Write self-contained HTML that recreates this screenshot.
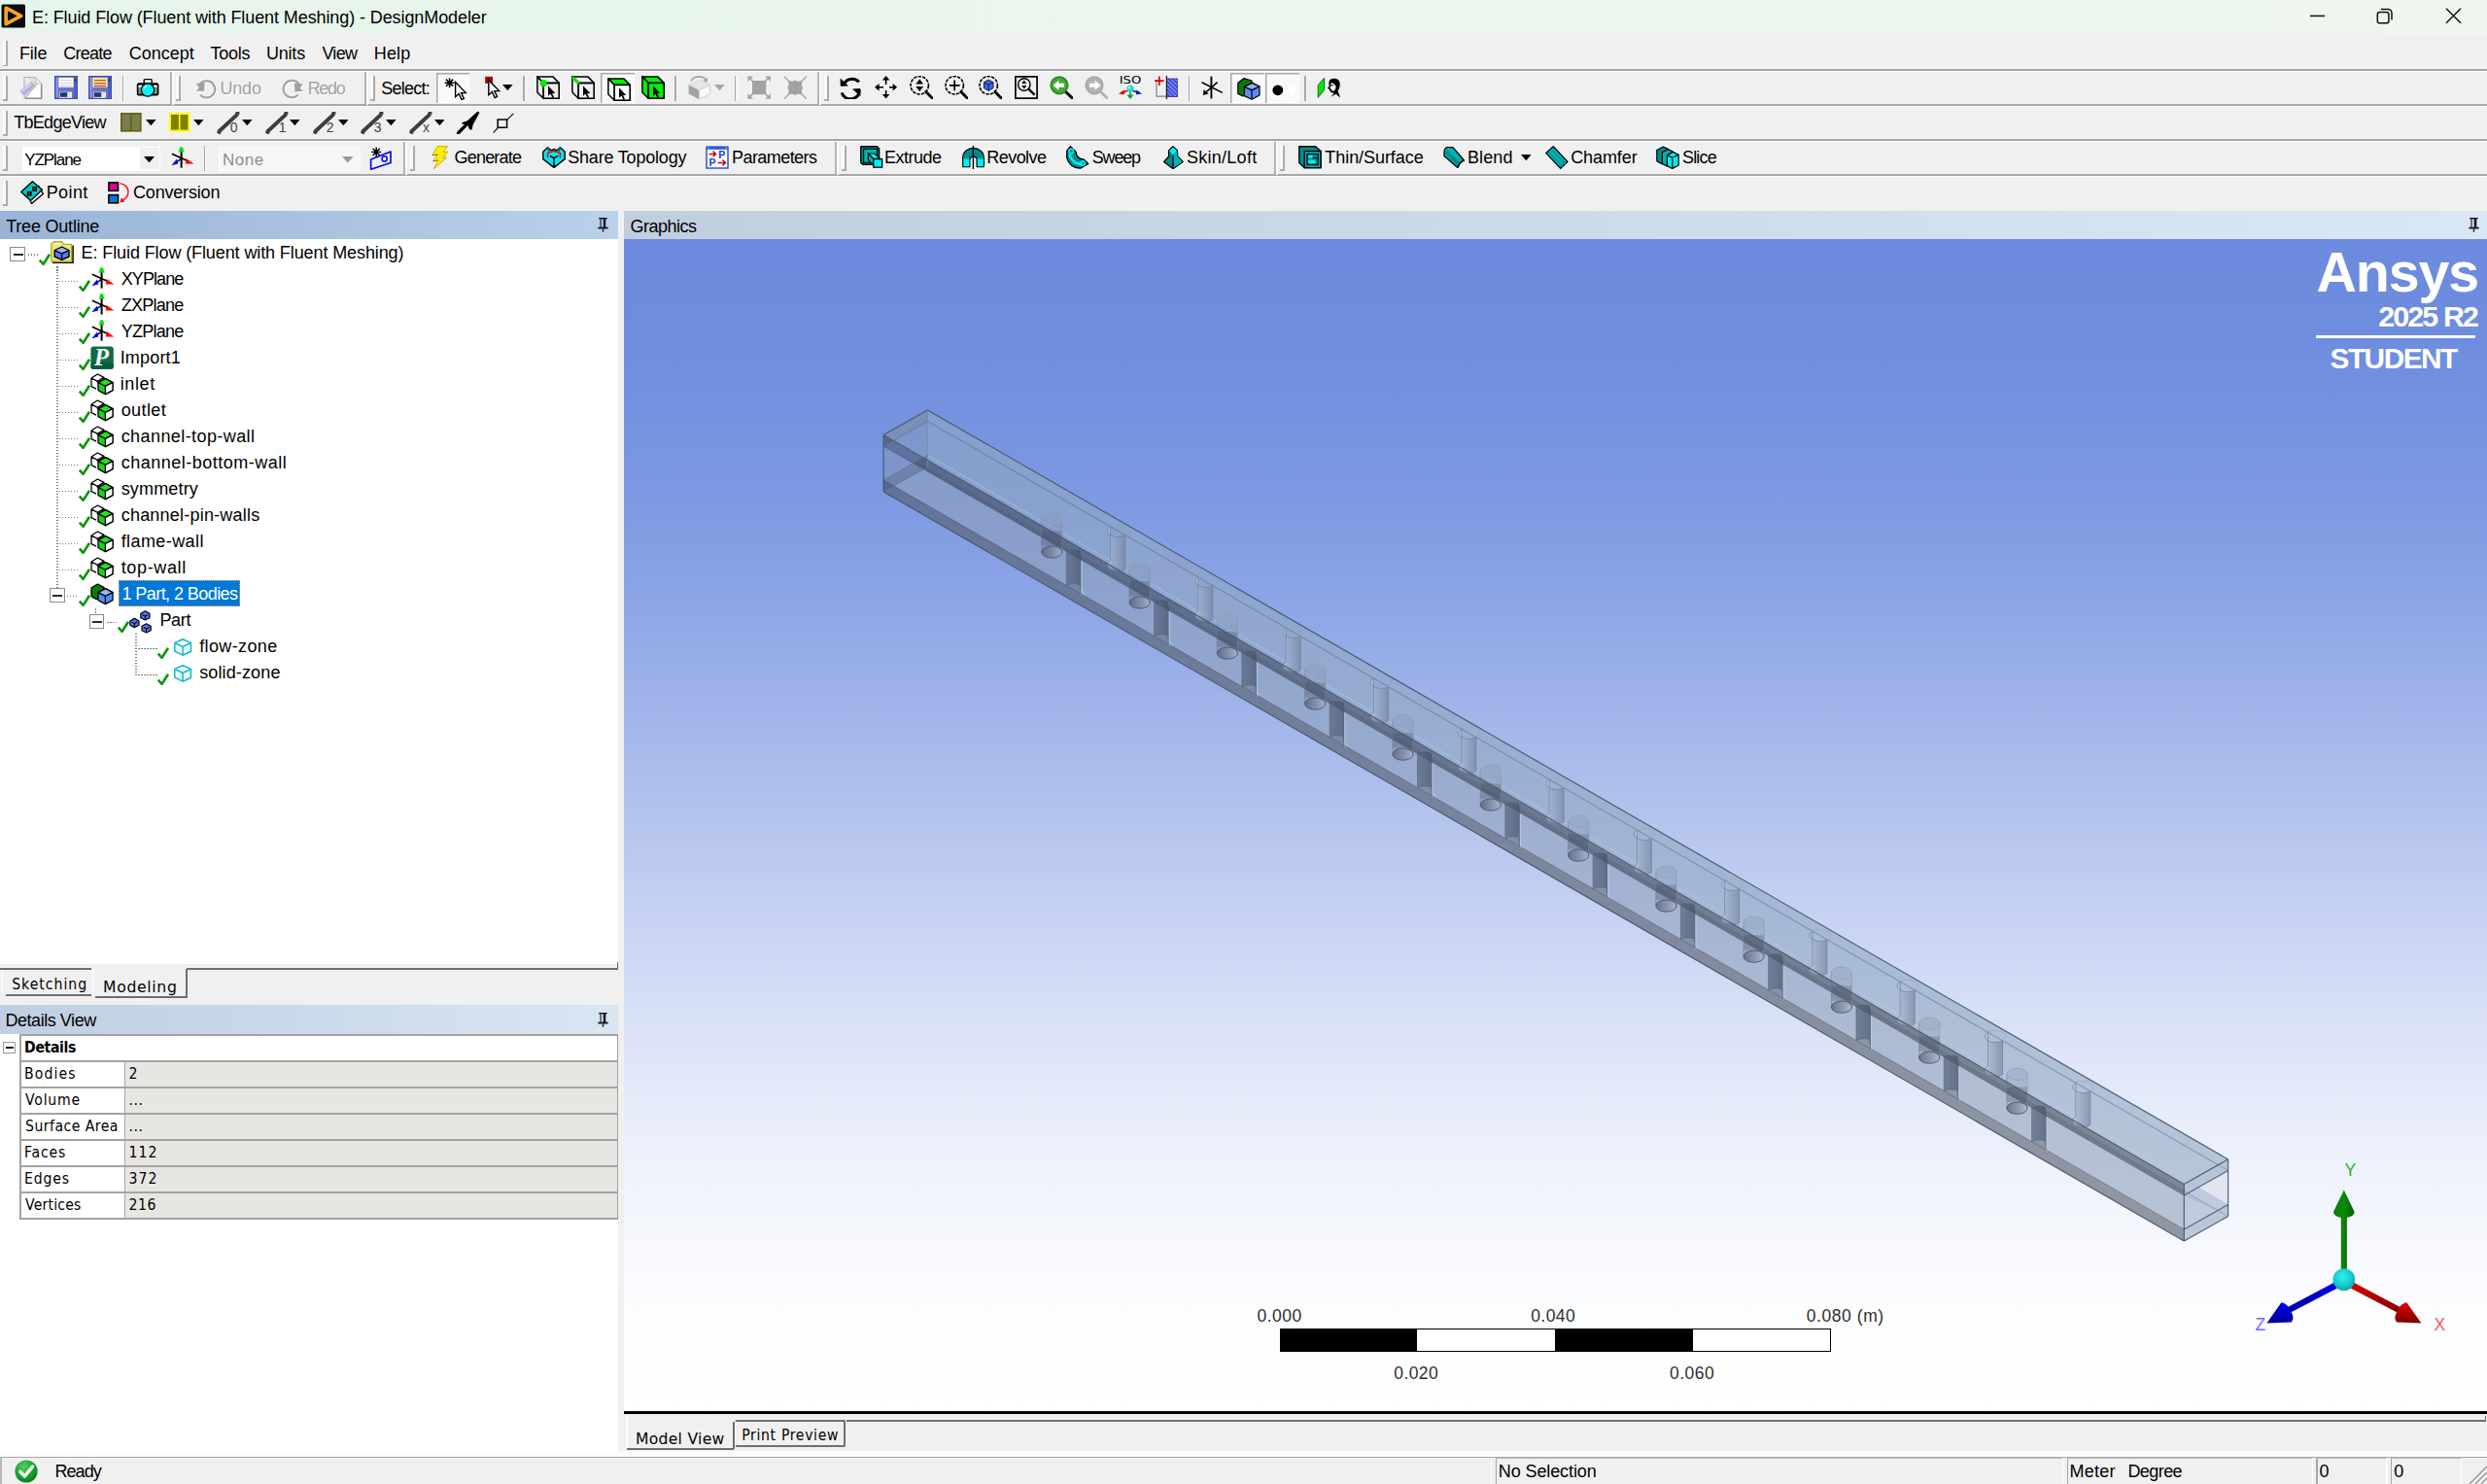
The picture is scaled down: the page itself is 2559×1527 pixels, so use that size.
<!DOCTYPE html>
<html lang="en"><head><meta charset="utf-8"><title>E: Fluid Flow (Fluent with Fluent Meshing) - DesignModeler</title><style>
html,body{margin:0;padding:0}
body{width:2559px;height:1527px;overflow:hidden;background:#f0f0f0;position:relative;font-family:"Liberation Sans",sans-serif}
.a{position:absolute;display:block}
.t{position:absolute;line-height:1;white-space:pre;display:block}
</style></head>
<body>

<header aria-label="Title bar and menu bar"><div class="a" style="left:0px;top:0px;width:2559px;height:35px;background:linear-gradient(90deg,#e6f5eb 0%,#ebf6ee 50%,#eef6ee 100%);"></div><svg class="a" style="left:1px;top:4px" width="26" height="25" viewBox="0 0 26 25"><rect x="0.5" y="0.5" width="24.5" height="24" rx="1.5" fill="#0b0b0b"/><path d="M5.2 4.2 L20.6 12.3 L5.2 20.6 Z" fill="none" stroke="#f5a81c" stroke-width="3.6" stroke-linejoin="round"/><path d="M8.6 9.6 L13.8 12.3 L8.6 15.2 Z" fill="#0b0b0b"/></svg><span class="t " style="left:33.00px;top:9.00px;font-size:18px;font-family:'Liberation Sans', sans-serif;color:#000;letter-spacing:-0.096px;">E: Fluid Flow (Fluent with Fluent Meshing) - DesignModeler</span><svg class="a" style="left:2360px;top:0" width="199" height="35" viewBox="0 0 199 35" fill="none" stroke="#111" stroke-width="1.5"><path d="M17 16.4 H32.2"/><rect x="86.3" y="12.4" width="11.6" height="11.4" rx="2.4"/><path d="M89.8 9.4 H97 A4 4 0 0 1 101 13.4 V20.6"/><path d="M157 8.8 L172 23.8 M172 8.8 L157 23.8"/></svg><div class="a" style="left:0px;top:35px;width:2559px;height:37px;background:#f0f0f0;"></div><div class="a" style="left:3px;top:42px;width:3px;height:25px;background:#fbfbfb;"></div><div class="a" style="left:6px;top:42px;width:2px;height:26px;background:#ababab;"></div><div class="a" style="left:3px;top:66.5px;width:5px;height:1.5px;background:#ababab;"></div><span class="t " style="left:19.90px;top:46.00px;font-size:18px;font-family:'Liberation Sans', sans-serif;color:#000;letter-spacing:-0.131px;">File</span><span class="t " style="left:65.20px;top:46.00px;font-size:18px;font-family:'Liberation Sans', sans-serif;color:#000;letter-spacing:-0.763px;">Create</span><span class="t " style="left:132.80px;top:46.00px;font-size:18px;font-family:'Liberation Sans', sans-serif;color:#000;letter-spacing:-0.024px;">Concept</span><span class="t " style="left:216.40px;top:46.00px;font-size:18px;font-family:'Liberation Sans', sans-serif;color:#000;letter-spacing:-0.205px;">Tools</span><span class="t " style="left:273.90px;top:46.00px;font-size:18px;font-family:'Liberation Sans', sans-serif;color:#000;letter-spacing:-0.177px;">Units</span><span class="t " style="left:331.40px;top:46.00px;font-size:18px;font-family:'Liberation Sans', sans-serif;color:#000;letter-spacing:-0.697px;">View</span><span class="t " style="left:384.70px;top:46.00px;font-size:18px;font-family:'Liberation Sans', sans-serif;color:#000;letter-spacing:0.197px;">Help</span><div class="a" style="left:0px;top:71px;width:2559px;height:2px;background:#a6a6a6;"></div><div class="a" style="left:0px;top:73px;width:2559px;height:1px;background:#fdfdfd;"></div><div class="a" style="left:0px;top:107px;width:2559px;height:2px;background:#a6a6a6;"></div><div class="a" style="left:0px;top:109px;width:2559px;height:1px;background:#fdfdfd;"></div><div class="a" style="left:0px;top:143px;width:2559px;height:2px;background:#a6a6a6;"></div><div class="a" style="left:0px;top:145px;width:2559px;height:1px;background:#fdfdfd;"></div><div class="a" style="left:0px;top:179px;width:2559px;height:2px;background:#a6a6a6;"></div><div class="a" style="left:0px;top:181px;width:2559px;height:1px;background:#fdfdfd;"></div></header>
<nav aria-label="Toolbars"><div class="a" style="left:3px;top:77.5px;width:3px;height:25px;background:#fbfbfb;"></div><div class="a" style="left:6px;top:77.5px;width:2px;height:26px;background:#ababab;"></div><div class="a" style="left:3px;top:102.0px;width:5px;height:1.5px;background:#ababab;"></div><svg class="a" style="left:19.6px;top:78.4px" width="24" height="24" viewBox="0 0 24 24"><defs><linearGradient id="gnew" x1="0" y1="0" x2="1" y2="1"><stop offset="0" stop-color="#fdfdfd"/><stop offset="0.55" stop-color="#c9c9c9"/><stop offset="0.56" stop-color="#ffffff"/><stop offset="1" stop-color="#ffffff"/></linearGradient></defs><path d="M5 1.5 H16.5 L23 8 V23 H5 Z" fill="url(#gnew)" stroke="#a9a9a9" stroke-width="1"/><path d="M16.5 1.5 V8 H23 Z" fill="#e9e9e9" stroke="#b5b5b5" stroke-width="0.8"/><path d="M22.5 9 V23.5 H6" fill="none" stroke="#8d8d8d" stroke-width="1.3"/><path d="M1 15.5 L12.5 7.2 L15.3 10.6 L4.3 19.6 Z" fill="#b9b3e6" stroke="#9a92d6" stroke-width="0.8" stroke-linejoin="round"/><path d="M2.2 15.6 L12.2 8.4" stroke="#dcd9f5" stroke-width="1.4"/></svg><svg class="a" style="left:55.6px;top:78.4px" width="24" height="24" viewBox="0 0 24 24"><rect x="0.6" y="0.6" width="22.8" height="22.8" fill="#6874cc" stroke="#3d4cb4" stroke-width="1.2"/><rect x="1.6" y="1.6" width="2" height="20.8" fill="#9098dc"/><rect x="20.3" y="1.6" width="2.2" height="21" fill="#4a58bc"/><rect x="4.4" y="1.8" width="15.2" height="10" fill="#ffffff"/><rect x="20.6" y="2.4" width="1.6" height="3.6" fill="#27348a"/><rect x="5.2" y="16.6" width="12.8" height="6.2" fill="#e6e6e6"/><rect x="5.8" y="17.2" width="7.4" height="4.6" fill="#24356f"/><rect x="6" y="4.0" width="12" height="1.3" fill="#d8d8d8"/><rect x="6" y="7.0" width="12" height="1.3" fill="#d8d8d8"/><rect x="6" y="9.8" width="12" height="1.3" fill="#d8d8d8"/></svg><svg class="a" style="left:91.4px;top:78.4px" width="24" height="24" viewBox="0 0 24 24"><rect x="0.6" y="0.6" width="22.8" height="22.8" fill="#6874cc" stroke="#3d4cb4" stroke-width="1.2"/><rect x="1.6" y="1.6" width="2" height="20.8" fill="#9098dc"/><rect x="20.3" y="1.6" width="2.2" height="21" fill="#4a58bc"/><rect x="4.4" y="1.8" width="15.2" height="10" fill="#f4e896"/><rect x="20.6" y="2.4" width="1.6" height="3.6" fill="#27348a"/><rect x="5.2" y="16.6" width="12.8" height="6.2" fill="#e6e6e6"/><rect x="5.8" y="17.2" width="7.4" height="4.6" fill="#24356f"/><rect x="6" y="4.0" width="12" height="1.3" fill="#c8503c"/><rect x="6" y="7.0" width="12" height="1.3" fill="#c8503c"/><rect x="6" y="9.8" width="12" height="1.3" fill="#c8503c"/></svg><div class="a" style="left:125.8px;top:78px;width:1.6px;height:26px;background:#a8a8a8;"></div><div class="a" style="left:127.39999999999999px;top:78px;width:1px;height:26px;background:#fafafa;"></div><svg class="a" style="left:139.6px;top:79px" width="24" height="24" viewBox="0 0 24 24"><rect x="8.2" y="2.6" width="8" height="4" rx="1" fill="#fff" stroke="#000" stroke-width="1.4"/><rect x="0.8" y="6.2" width="22.6" height="13.2" rx="2.2" fill="#000"/><rect x="2.4" y="9.6" width="4" height="8" fill="#8a8a8a"/><rect x="2.4" y="8.6" width="4" height="2" fill="#fff"/><rect x="17.8" y="9.6" width="4" height="8" fill="#8a8a8a"/><rect x="17.8" y="8.6" width="4" height="2" fill="#fff"/><circle cx="12" cy="13.6" r="6.6" fill="#00f6f6" stroke="#000" stroke-width="1.2"/><path d="M8.6 11.8 A4.6 4.6 0 0 1 11 9.2" stroke="#c8ffff" stroke-width="1.3" fill="none"/></svg><div class="a" style="left:175.0px;top:74px;width:2px;height:33px;background:#b4b4b4;"></div><div class="a" style="left:177.0px;top:74px;width:2px;height:34px;background:#fdfdfd;"></div><div class="a" style="left:181px;top:77.5px;width:3px;height:25px;background:#fbfbfb;"></div><div class="a" style="left:184px;top:77.5px;width:2px;height:26px;background:#ababab;"></div><div class="a" style="left:181px;top:102.0px;width:5px;height:1.5px;background:#ababab;"></div><svg class="a" style="left:201px;top:79px" width="24" height="24" viewBox="0 0 24 24"><g transform="translate(1 1)"><path d="M3.4 10.4 A8.6 8.6 0 1 1 5.2 18.6" fill="none" stroke="#ffffff" stroke-width="2"/><path d="M0.8 7 L9.6 6.2 L9.2 15 L0.8 14.4 L4 11 Z" fill="#ffffff"/></g><g transform="translate(0 0)"><path d="M3.4 10.4 A8.6 8.6 0 1 1 5.2 18.6" fill="none" stroke="#a0a0a0" stroke-width="2"/><path d="M0.8 7 L9.6 6.2 L9.2 15 L0.8 14.4 L4 11 Z" fill="#a0a0a0"/></g></svg><span class="t " style="left:226.60px;top:82.00px;font-size:18px;font-family:'Liberation Sans', sans-serif;color:#a2a2a2;letter-spacing:-0.240px;text-shadow:1px 1px 0 #fff;">Undo</span><svg class="a" style="left:289px;top:79px" width="24" height="24" viewBox="0 0 24 24"><g transform="translate(1 1)"><path d="M20 10.6 A8.8 8.8 0 1 0 17.6 18.8" fill="none" stroke="#ffffff" stroke-width="2"/><path d="M22.8 7.4 L14 6.6 L14.4 15.4 L22.8 14.8 L19.6 11.4 Z" fill="#ffffff"/></g><g transform="translate(0 0)"><path d="M20 10.6 A8.8 8.8 0 1 0 17.6 18.8" fill="none" stroke="#a0a0a0" stroke-width="2"/><path d="M22.8 7.4 L14 6.6 L14.4 15.4 L22.8 14.8 L19.6 11.4 Z" fill="#a0a0a0"/></g></svg><span class="t " style="left:316.70px;top:82.00px;font-size:18px;font-family:'Liberation Sans', sans-serif;color:#a2a2a2;letter-spacing:-1.340px;text-shadow:1px 1px 0 #fff;">Redo</span><div class="a" style="left:374.5px;top:74px;width:2px;height:33px;background:#b4b4b4;"></div><div class="a" style="left:376.5px;top:74px;width:2px;height:34px;background:#fdfdfd;"></div><div class="a" style="left:381px;top:77.5px;width:3px;height:25px;background:#fbfbfb;"></div><div class="a" style="left:384px;top:77.5px;width:2px;height:26px;background:#ababab;"></div><div class="a" style="left:381px;top:102.0px;width:5px;height:1.5px;background:#ababab;"></div><span class="t " style="left:392.20px;top:82.00px;font-size:18px;font-family:'Liberation Sans', sans-serif;color:#000;letter-spacing:-0.738px;">Select:</span><div class="a" style="left:448.8px;top:75px;width:34.5px;height:31px;background:#f9f9f9;box-shadow:inset 1.5px 1.5px 0 #a9a9a9, inset -1px -1px 0 #ffffff;"></div><svg class="a" style="left:457.2px;top:79.2px" width="24" height="24" viewBox="0 0 24 24"><g stroke="#000" stroke-width="1.5"><path d="M5.6 1.2 V11.2 M0.6 6.2 H10.6 M2 2.6 L9.2 9.8 M9.2 2.6 L2 9.8"/></g><circle cx="5.6" cy="6.2" r="2.4" fill="#000"/><path transform="translate(11.6 5.4) scale(1.08)" d="M0 0 V14.2 L3.3 11.2 L5.9 16.8 L8.1 15.8 L5.6 10.4 H10 Z" fill="#fff" stroke="#000" stroke-width="1.3" stroke-linejoin="miter"/></svg><svg class="a" style="left:497px;top:78px" width="24" height="24" viewBox="0 0 24 24"><rect x="2.2" y="0.8" width="7.8" height="7" fill="#a80000"/><path transform="translate(5.8 4.4) scale(1.08)" d="M0 0 V14.2 L3.3 11.2 L5.9 16.8 L8.1 15.8 L5.6 10.4 H10 Z" fill="#fff" stroke="#000" stroke-width="1.3"/></svg><svg class="a" style="left:517.4px;top:87.2px" width="10.6" height="6.2" viewBox="0 0 10.6 6.2"><path d="M0 0 H10.6 L5.3 6.2 Z" fill="#000"/></svg><div class="a" style="left:538.4000000000001px;top:78px;width:1.6px;height:26px;background:#a8a8a8;"></div><div class="a" style="left:540.0px;top:78px;width:1px;height:26px;background:#fafafa;"></div><svg class="a" style="left:552px;top:78.4px" width="24" height="24" viewBox="0 0 24 24"><path d="M0.9 0.9 H16.8 L23.2 7.4 H7.2 Z" fill="none" stroke="#000" stroke-width="1.5" stroke-linejoin="round"/><path d="M0.9 0.9 L7.2 7.4 V23.2 L0.9 17 Z" fill="none" stroke="#000" stroke-width="1.5" stroke-linejoin="round"/><rect x="7.2" y="7.4" width="16" height="15.8" fill="none" stroke="#000" stroke-width="1.6"/><path transform="translate(12 10.2) scale(0.74)" d="M0 0 V14.2 L3.3 11.2 L5.9 16.8 L8.1 15.8 L5.6 10.4 H10 Z" fill="#000"/><circle cx="7.2" cy="7.6" r="3.4" fill="#00f000" stroke="#00c800" stroke-width="0.6"/></svg><svg class="a" style="left:588px;top:78.4px" width="24" height="24" viewBox="0 0 24 24"><path d="M0.9 0.9 H16.8 L23.2 7.4 H7.2 Z" fill="none" stroke="#000" stroke-width="1.5" stroke-linejoin="round"/><path d="M0.9 0.9 L7.2 7.4 V23.2 L0.9 17 Z" fill="none" stroke="#000" stroke-width="1.5" stroke-linejoin="round"/><rect x="7.2" y="7.4" width="16" height="15.8" fill="none" stroke="#000" stroke-width="1.6"/><path transform="translate(12 10.2) scale(0.74)" d="M0 0 V14.2 L3.3 11.2 L5.9 16.8 L8.1 15.8 L5.6 10.4 H10 Z" fill="#000"/><path d="M2.2 2.4 L6.6 6.8" stroke="#00e800" stroke-width="3.2" stroke-linecap="round"/></svg><div class="a" style="left:618.3px;top:75px;width:34.5px;height:31px;background:#f9f9f9;box-shadow:inset 1.5px 1.5px 0 #a9a9a9, inset -1px -1px 0 #ffffff;"></div><svg class="a" style="left:625.4px;top:79.6px" width="24" height="24" viewBox="0 0 24 24"><path d="M0.9 0.9 H16.8 L23.2 7.4 H7.2 Z" fill="#00f000" stroke="#000" stroke-width="1.5" stroke-linejoin="round"/><path d="M0.9 0.9 L7.2 7.4 V23.2 L0.9 17 Z" fill="#fff" stroke="#000" stroke-width="1.5" stroke-linejoin="round"/><rect x="7.2" y="7.4" width="16" height="15.8" fill="#fff" stroke="#000" stroke-width="1.6"/><path transform="translate(12 10.2) scale(0.74)" d="M0 0 V14.2 L3.3 11.2 L5.9 16.8 L8.1 15.8 L5.6 10.4 H10 Z" fill="#000"/></svg><svg class="a" style="left:660px;top:78.4px" width="24" height="24" viewBox="0 0 24 24"><path d="M0.9 0.9 H16.8 L23.2 7.4 H7.2 Z" fill="#00f000" stroke="#000" stroke-width="1.5" stroke-linejoin="round"/><path d="M0.9 0.9 L7.2 7.4 V23.2 L0.9 17 Z" fill="#00f000" stroke="#000" stroke-width="1.5" stroke-linejoin="round"/><rect x="7.2" y="7.4" width="16" height="15.8" fill="#00f000" stroke="#000" stroke-width="1.6"/><path transform="translate(12 10.2) scale(0.74)" d="M0 0 V14.2 L3.3 11.2 L5.9 16.8 L8.1 15.8 L5.6 10.4 H10 Z" fill="#000"/></svg><div class="a" style="left:694.4000000000001px;top:78px;width:1.6px;height:26px;background:#a8a8a8;"></div><div class="a" style="left:696.0px;top:78px;width:1px;height:26px;background:#fafafa;"></div><svg class="a" style="left:708px;top:78px" width="24" height="24" viewBox="0 0 24 24"><path d="M3.2 5.6 A8.2 6.4 0 0 1 18.6 4.6" fill="none" stroke="#a6a6a6" stroke-width="1.6"/><path d="M15.2 5.8 L20 6.4 L19.6 1.4 Z" fill="#a6a6a6"/><path d="M0.6 9.6 L11 14.6 V24 L0.6 18.6 Z" fill="#a3a3a3"/><path d="M11.6 14.6 L22.6 9.8 V18.8 L11.6 24 Z" fill="#fafafa" stroke="#c8c8c8" stroke-width="0.8"/><path d="M0.8 9 L11.2 4.6 L22.4 9.2 L11.2 14 Z" fill="#e8e8e8" stroke="#cfcfcf" stroke-width="0.6"/></svg><svg class="a" style="left:735px;top:87.4px" width="10.6" height="6.2" viewBox="0 0 10.6 6.2"><path d="M0 0 H10.6 L5.3 6.2 Z" fill="#a6a6a6"/></svg><div class="a" style="left:755.9000000000001px;top:78px;width:1.6px;height:26px;background:#a8a8a8;"></div><div class="a" style="left:757.5px;top:78px;width:1px;height:26px;background:#fafafa;"></div><svg class="a" style="left:769.3px;top:78.2px" width="24" height="24" viewBox="0 0 24 24"><rect x="5" y="5" width="14.2" height="14.2" fill="#a2a2a2"/><g fill="#a2a2a2"><path d="M0.4 0.4 H6 L0.4 6 Z"/><path d="M23.8 0.4 V6 L18.2 0.4 Z"/><path d="M0.4 23.8 V18.2 L6 23.8 Z"/><path d="M23.8 23.8 H18.2 L23.8 18.2 Z"/></g><g stroke="#a2a2a2" stroke-width="1.6"><path d="M2 2 L6 6 M22 2 L18 6 M2 22 L6 18 M22 22 L18 18"/></g></svg><svg class="a" style="left:805.6px;top:78.2px" width="24" height="24" viewBox="0 0 24 24"><g stroke="#a6a6a6" stroke-width="1.4"><path d="M0.6 0.6 L24 24 M24 0.6 L0.6 24"/></g><path d="M5 6.6 L7 5 L9 6 L12 4.4 L15.4 6 L17.4 5 L19.4 6.8 L18.8 9.4 L20 12.2 L18.8 15.4 L19.4 17.8 L17.4 19.4 L15.2 18.6 L12.2 20 L9 18.6 L7 19.4 L5 17.6 L5.8 15.2 L4.4 12.2 L5.8 9.2 Z" fill="#a2a2a2"/></svg><div class="a" style="left:841.0px;top:74px;width:2px;height:33px;background:#b4b4b4;"></div><div class="a" style="left:843.0px;top:74px;width:2px;height:34px;background:#fdfdfd;"></div><div class="a" style="left:847.5px;top:77.5px;width:3px;height:25px;background:#fbfbfb;"></div><div class="a" style="left:850.5px;top:77.5px;width:2px;height:26px;background:#ababab;"></div><div class="a" style="left:847.5px;top:102.0px;width:5px;height:1.5px;background:#ababab;"></div><svg class="a" style="left:864.2px;top:78px" width="24" height="24" viewBox="0 0 24 24"><path d="M4.4 9 A8.6 7.4 0 0 1 19.8 6.4" fill="none" stroke="#000" stroke-width="3"/><path d="M0.6 2.6 L0.8 10.8 L9 10.4 Z" fill="#000"/><path d="M20 14.6 A8.8 7.6 0 0 1 2.2 17.4" fill="none" stroke="#000" stroke-width="3"/><path d="M21.4 21.2 L21.2 13 L13 13.4 Z" fill="#000"/></svg><svg class="a" style="left:900px;top:78.2px" width="24" height="24" viewBox="0 0 24 24"><g stroke="#000" stroke-width="1.6"><path d="M11.6 3 V9 M11.6 15 V21 M3 11.8 H9 M15 11.8 H21"/></g><g fill="#000"><path d="M11.6 0 L15.4 4.6 H7.8 Z"/><path d="M11.6 23.6 L15.4 19 H7.8 Z"/><path d="M0 11.8 L4.6 8 V15.6 Z"/><path d="M23.2 11.8 L18.6 8 V15.6 Z"/></g></svg><svg class="a" style="left:935.6px;top:78.2px" width="24" height="24" viewBox="0 0 24 24"><circle cx="10.2" cy="9.8" r="9.2" fill="none" stroke="#000" stroke-width="1.6" stroke-dasharray="3.4 1.2"/><path d="M16.823999999999998 16.424 L23.2 23" stroke="#000" stroke-width="2.8" stroke-linecap="round"/><path d="M10.2 3.6 L14.2 8.6 H6.2 Z M10.2 16 L14.2 11 H6.2 Z" fill="#000"/></svg><svg class="a" style="left:971.6px;top:78.2px" width="24" height="24" viewBox="0 0 24 24"><circle cx="10.2" cy="9.8" r="9.2" fill="none" stroke="#000" stroke-width="1.6" stroke-dasharray="3.4 1.2"/><path d="M16.823999999999998 16.424 L23.2 23" stroke="#000" stroke-width="2.8" stroke-linecap="round"/><path d="M10.2 4.4 V15.2 M4.8 9.8 H15.6" stroke="#000" stroke-width="1.7"/></svg><svg class="a" style="left:1007.4px;top:78.2px" width="24" height="24" viewBox="0 0 24 24"><circle cx="10.2" cy="9.8" r="9.2" fill="none" stroke="#000" stroke-width="1.6" stroke-dasharray="3.4 1.2"/><path d="M16.823999999999998 16.424 L23.2 23" stroke="#000" stroke-width="2.8" stroke-linecap="round"/><path d="M10.2 4.2 L15 6.6 V12.6 L10.2 15.4 L5.4 12.6 V6.6 Z" fill="#3c64e6" stroke="#10205a" stroke-width="1"/><path d="M5.6 6.8 L10.2 9.2 L14.8 6.8 M10.2 9.2 V15" stroke="#10205a" stroke-width="1" fill="none"/></svg><svg class="a" style="left:1044px;top:78.2px" width="24" height="24" viewBox="0 0 24 24"><rect x="0.9" y="0.9" width="22.2" height="22.2" fill="none" stroke="#000" stroke-width="1.7"/><circle cx="9.8" cy="9" r="6.2" fill="none" stroke="#000" stroke-width="1.4"/><path d="M14.4 13.6 L20.6 19.6" stroke="#000" stroke-width="2.4"/><path d="M9.8 4.6 L12.4 8 H7.2 Z M9.8 13.4 L12.4 10 H7.2 Z" fill="#000"/></svg><svg class="a" style="left:1080px;top:78.2px" width="24" height="24" viewBox="0 0 24 24"><path d="M16 16 L23 22.6" stroke="#000" stroke-width="3" stroke-linecap="round"/><circle cx="10" cy="9.8" r="8.6" fill="#4aa83a" stroke="#2c8a22" stroke-width="2"/><path d="M3.4 9.8 L9.4 4.8 V7.8 H15 V11.8 H9.4 V14.8 Z" fill="#fff"/></svg><svg class="a" style="left:1116px;top:78.2px" width="24" height="24" viewBox="0 0 24 24"><path d="M16 16 L23 22.6" stroke="#b0b0b0" stroke-width="3" stroke-linecap="round"/><circle cx="10" cy="9.8" r="8.6" fill="#b4b4b4" stroke="#a8a8a8" stroke-width="2"/><path d="M16.6 9.8 L10.6 4.8 V7.8 H5 V11.8 H10.6 V14.8 Z" fill="#fff"/></svg><svg class="a" style="left:1151.4px;top:78.2px" width="24" height="24" viewBox="0 0 24 24"><text x="12" y="7.6" font-family="'DejaVu Sans',sans-serif" font-size="9.6" text-anchor="middle" textLength="22.6" lengthAdjust="spacingAndGlyphs" fill="#000">ISO</text><path d="M12 14 V22" stroke="#10a030" stroke-width="1.6"/><path d="M12 24 L8.4 19.4 H15.6 Z" fill="#10a030"/><path d="M12 14.6 L3 17.4" stroke="#e00000" stroke-width="1.6"/><path d="M0 18.6 L5.6 14.4 L6.2 19.2 Z" fill="#e00000"/><path d="M12 14.6 L21 17.4" stroke="#0018d0" stroke-width="1.6"/><path d="M24 18.6 L18.4 14.4 L17.8 19.2 Z" fill="#0018d0"/><circle cx="12" cy="13.2" r="3.6" fill="#20d8e0"/><circle cx="11" cy="12.2" r="1.2" fill="#b8ffff"/></svg><svg class="a" style="left:1188px;top:78.2px" width="24" height="24" viewBox="0 0 24 24"><defs><pattern id="hat" width="3" height="3" patternUnits="userSpaceOnUse" patternTransform="rotate(-45)"><rect width="3" height="3" fill="#3c48dc"/><rect width="1" height="3" fill="#98a4f4"/></pattern></defs><path d="M2 5.4 V21.2 H12" fill="none" stroke="#808080" stroke-width="1.2"/><rect x="12.4" y="3" width="11" height="18.6" fill="url(#hat)" stroke="#2a2a9a" stroke-width="0.8"/><path d="M12.4 0 V24" stroke="#202020" stroke-width="1.3"/><path d="M0 5.2 H9.6 M4.8 0.6 V10" stroke="#d80000" stroke-width="1.7"/></svg><div class="a" style="left:1222.5px;top:78px;width:1.6px;height:26px;background:#a8a8a8;"></div><div class="a" style="left:1224.1px;top:78px;width:1px;height:26px;background:#fafafa;"></div><svg class="a" style="left:1235.6px;top:78.2px" width="24" height="24" viewBox="0 0 24 24"><path d="M10.4 0.6 V23.4" stroke="#000" stroke-width="1.9"/><path d="M0.6 6.8 L21.8 17.4" stroke="#000" stroke-width="1.6"/><path d="M16.6 6.6 L3.6 18" stroke="#000" stroke-width="1.6"/><path d="M1.8 20 L2.6 14.2 L7.6 18.6 Z" fill="#000"/></svg><div class="a" style="left:1266.4px;top:75px;width:34.5px;height:31px;background:#f9f9f9;box-shadow:inset 1.5px 1.5px 0 #a9a9a9, inset -1px -1px 0 #ffffff;"></div><svg class="a" style="left:1272.6px;top:79px" width="24" height="24" viewBox="0 0 24 24"><path d="M0.8 6.2 L7 1.6 L15 4 V16 L6 20 L0.8 17.4 Z" fill="#0a7a0a" stroke="#000" stroke-width="1.2" stroke-linejoin="round"/><path d="M7.4 10.2 L15.4 6.4 L23 10 V19 L15 23.2 L7.4 19.6 Z" fill="#5c8cf0" stroke="#000" stroke-width="1.2" stroke-linejoin="round"/><path d="M7.4 10.2 L15 13.6 L23 10 M15 13.6 V23" fill="none" stroke="#000" stroke-width="1.2"/><path d="M7.4 10.2 L15.4 6.4 L23 10 L15 13.6 Z" fill="#8cb0f8" stroke="#000" stroke-width="1.2" stroke-linejoin="round"/></svg><div class="a" style="left:1302.2px;top:75px;width:34.5px;height:31px;background:#f9f9f9;box-shadow:inset 1.5px 1.5px 0 #a9a9a9, inset -1px -1px 0 #ffffff;"></div><svg class="a" style="left:1308px;top:86px" width="28" height="14" viewBox="0 0 28 14"><circle cx="6.8" cy="6.8" r="5.4" fill="#000"/><path d="M20.8 1.2 L26.4 6.8 L20.8 12.4 L15.2 6.8 Z" fill="#fff"/></svg><div class="a" style="left:1342.0px;top:78px;width:1.6px;height:26px;background:#a8a8a8;"></div><div class="a" style="left:1343.6px;top:78px;width:1px;height:26px;background:#fafafa;"></div><svg class="a" style="left:1355.4px;top:78px" width="24" height="24" viewBox="0 0 24 24"><path d="M1.2 9.6 L7.6 2.2 V14.6 L1.2 22.4 Z" fill="#10e010" stroke="#087808" stroke-width="1"/><path d="M12.6 5.8 C13 2.4 19.8 1.6 22.6 4.8 C24.6 7.6 23.8 12.8 21.6 15.4 L22.6 18 L24 22.6 L21.6 20.4 L19.6 18.8 L14.6 21.4 L17.8 17.6 C15 17.8 13.6 16.4 13 14.2 L10.8 12.6 L12.8 11 C12.2 9 12.2 7.4 12.6 5.8 Z" fill="#000"/><path d="M14.4 7.8 C15.4 7 17.2 7.4 17.6 8.8 L19.4 10.2 C19.8 12.4 19 14.4 17.4 15.6 C15.8 15.8 14.8 14.8 14.6 13.2 L13 12.4 L14.6 11 Z" fill="#fff"/><path d="M15 9.8 H17" stroke="#000" stroke-width="1"/></svg><div class="a" style="left:3px;top:113.5px;width:3px;height:25px;background:#fbfbfb;"></div><div class="a" style="left:6px;top:113.5px;width:2px;height:26px;background:#ababab;"></div><div class="a" style="left:3px;top:138.0px;width:5px;height:1.5px;background:#ababab;"></div><span class="t " style="left:14.20px;top:117.00px;font-size:18px;font-family:'Liberation Sans', sans-serif;color:#000;letter-spacing:-0.704px;">TbEdgeView</span><svg class="a" style="left:124.2px;top:114px" width="24" height="24" viewBox="0 0 24 24"><rect x="0.8" y="2.8" width="20" height="18" fill="#7a7c52" stroke="#626200" stroke-width="1.6"/><path d="M10.8 2.8 V20.8" stroke="#626200" stroke-width="1.4"/></svg><svg class="a" style="left:150px;top:123.2px" width="10.6" height="6.2" viewBox="0 0 10.6 6.2"><path d="M0 0 H10.6 L5.3 6.2 Z" fill="#000"/></svg><svg class="a" style="left:174px;top:114px" width="24" height="24" viewBox="0 0 24 24"><rect x="1" y="3" width="19.4" height="17.6" fill="#808000" stroke="#ffff00" stroke-width="2"/><path d="M10.7 3 V20.6" stroke="#ffff00" stroke-width="1.6"/></svg><svg class="a" style="left:199.4px;top:123.2px" width="10.6" height="6.2" viewBox="0 0 10.6 6.2"><path d="M0 0 H10.6 L5.3 6.2 Z" fill="#000"/></svg><svg class="a" style="left:223.2px;top:114.2px" width="24" height="24" viewBox="0 0 24 24"><path d="M1.8 21.8 L21.6 3.4" stroke="#3e3e3e" stroke-width="4" stroke-linecap="butt"/><path d="M0.6 21.2 L3.8 23.6 M19.4 2.4 H23.4" stroke="#3e3e3e" stroke-width="2.6"/><text x="17.6" y="22.4" font-family="'Liberation Sans',sans-serif" font-size="14" text-anchor="middle" fill="#444">0</text></svg><svg class="a" style="left:249.0px;top:123.2px" width="10.6" height="6.2" viewBox="0 0 10.6 6.2"><path d="M0 0 H10.6 L5.3 6.2 Z" fill="#000"/></svg><svg class="a" style="left:272.59999999999997px;top:114.2px" width="24" height="24" viewBox="0 0 24 24"><path d="M1.8 21.8 L21.6 3.4" stroke="#3e3e3e" stroke-width="4" stroke-linecap="butt"/><path d="M0.6 21.2 L3.8 23.6 M19.4 2.4 H23.4" stroke="#3e3e3e" stroke-width="2.6"/><text x="17.6" y="22.4" font-family="'Liberation Sans',sans-serif" font-size="14" text-anchor="middle" fill="#444">1</text></svg><svg class="a" style="left:298.4px;top:123.2px" width="10.6" height="6.2" viewBox="0 0 10.6 6.2"><path d="M0 0 H10.6 L5.3 6.2 Z" fill="#000"/></svg><svg class="a" style="left:322.0px;top:114.2px" width="24" height="24" viewBox="0 0 24 24"><path d="M1.8 21.8 L21.6 3.4" stroke="#3e3e3e" stroke-width="4" stroke-linecap="butt"/><path d="M0.6 21.2 L3.8 23.6 M19.4 2.4 H23.4" stroke="#3e3e3e" stroke-width="2.6"/><text x="17.6" y="22.4" font-family="'Liberation Sans',sans-serif" font-size="14" text-anchor="middle" fill="#444">2</text></svg><svg class="a" style="left:347.8px;top:123.2px" width="10.6" height="6.2" viewBox="0 0 10.6 6.2"><path d="M0 0 H10.6 L5.3 6.2 Z" fill="#000"/></svg><svg class="a" style="left:371.4px;top:114.2px" width="24" height="24" viewBox="0 0 24 24"><path d="M1.8 21.8 L21.6 3.4" stroke="#3e3e3e" stroke-width="4" stroke-linecap="butt"/><path d="M0.6 21.2 L3.8 23.6 M19.4 2.4 H23.4" stroke="#3e3e3e" stroke-width="2.6"/><text x="17.6" y="22.4" font-family="'Liberation Sans',sans-serif" font-size="14" text-anchor="middle" fill="#444">3</text></svg><svg class="a" style="left:397.2px;top:123.2px" width="10.6" height="6.2" viewBox="0 0 10.6 6.2"><path d="M0 0 H10.6 L5.3 6.2 Z" fill="#000"/></svg><svg class="a" style="left:420.79999999999995px;top:114.2px" width="24" height="24" viewBox="0 0 24 24"><path d="M1.8 21.8 L21.6 3.4" stroke="#3e3e3e" stroke-width="4" stroke-linecap="butt"/><path d="M0.6 21.2 L3.8 23.6 M19.4 2.4 H23.4" stroke="#3e3e3e" stroke-width="2.6"/><text x="17.6" y="22.4" font-family="'Liberation Sans',sans-serif" font-size="14" text-anchor="middle" fill="#444">x</text></svg><svg class="a" style="left:446.6px;top:123.2px" width="10.6" height="6.2" viewBox="0 0 10.6 6.2"><path d="M0 0 H10.6 L5.3 6.2 Z" fill="#000"/></svg><svg class="a" style="left:470.4px;top:114.4px" width="24" height="24" viewBox="0 0 24 24"><path d="M1 23.4 L9.6 14.6" stroke="#000" stroke-width="3.4" stroke-linecap="round"/><path d="M5.6 12 L10.8 10.2 L21.6 0.6 L23.4 2 L16.6 14.6 L15.6 19.6 L13 19.2 L11.2 14.4 L5.4 13.6 Z" fill="#000"/></svg><svg class="a" style="left:506.6px;top:115.6px" width="24" height="24" viewBox="0 0 24 24"><rect x="5.2" y="7" width="9.4" height="8.2" fill="none" stroke="#000" stroke-width="1.5"/><path d="M0.6 20.6 L5.2 15.6 M14.6 7.4 L21.4 0.8" stroke="#000" stroke-width="1.1"/></svg><div class="a" style="left:3px;top:149.5px;width:3px;height:25px;background:#fbfbfb;"></div><div class="a" style="left:6px;top:149.5px;width:2px;height:26px;background:#ababab;"></div><div class="a" style="left:3px;top:174.0px;width:5px;height:1.5px;background:#ababab;"></div><div class="a" style="left:22.6px;top:150.6px;width:142px;height:25px;background:#ffffff;"></div><div class="a" style="left:143.8px;top:152px;width:20px;height:22.4px;background:#f0f0f0;"></div><span class="t " style="left:25.30px;top:156.00px;font-size:17px;font-family:'Liberation Sans', sans-serif;color:#000;letter-spacing:-1.091px;">YZPlane</span><svg class="a" style="left:148.3px;top:161px" width="11" height="6.4" viewBox="0 0 11 6.4"><path d="M0 0 H11 L5.5 6.4 Z" fill="#000"/></svg><svg class="a" style="left:176.4px;top:151px" width="24" height="24" viewBox="0 0 24 24"><path d="M10.6 3 V21.6" stroke="#000" stroke-width="2"/><path d="M10.6 0 L13.8 5.6 H7.4 Z" fill="#00e000"/><circle cx="10.6" cy="2.2" r="2" fill="#00e000"/><path d="M0.8 7.2 L18 15" stroke="#000" stroke-width="1.7"/><path d="M15.6 12 L23.4 17.4 H14.8 Z" fill="#ff0000"/><path d="M10.6 12 L5.6 16" stroke="#000" stroke-width="1.6"/><path d="M6 12.4 L7.2 17.4 L0.4 19.2 Z" fill="#0000ff"/></svg><div class="a" style="left:209.79999999999998px;top:150px;width:1.6px;height:26px;background:#a8a8a8;"></div><div class="a" style="left:211.4px;top:150px;width:1px;height:26px;background:#fafafa;"></div><div class="a" style="left:225px;top:150.6px;width:146px;height:25px;background:#f6f6f6;box-shadow:inset 0 0 0 1.5px #fafafa;"></div><span class="t " style="left:229.00px;top:156.00px;font-size:17px;font-family:'Liberation Sans', sans-serif;color:#8d8d8d;letter-spacing:0.505px;">None</span><svg class="a" style="left:352px;top:161.4px" width="11.6" height="6.4" viewBox="0 0 11.6 6.4"><path d="M0 0 H11.6 L5.8 6.4 Z" fill="#9a9a9a"/></svg><svg class="a" style="left:379.6px;top:151px" width="24" height="24" viewBox="0 0 24 24"><path d="M1.6 13 L22 5 V16.4 L1.6 23.2 Z" fill="none" stroke="#0000f0" stroke-width="1.6" stroke-linejoin="round"/><circle cx="15.6" cy="12.4" r="2.6" fill="none" stroke="#0000f0" stroke-width="1.5"/><path d="M7.2 0.4 V10.4 M2.2 5.4 H12.2 M3.6 1.8 L10.8 9 M10.8 1.8 L3.6 9" stroke="#000" stroke-width="1.4"/><circle cx="7.2" cy="5.4" r="2.2" fill="#000"/></svg><div class="a" style="left:415.0px;top:146px;width:2px;height:33px;background:#b4b4b4;"></div><div class="a" style="left:417.0px;top:146px;width:2px;height:34px;background:#fdfdfd;"></div><div class="a" style="left:421.5px;top:149.5px;width:3px;height:25px;background:#fbfbfb;"></div><div class="a" style="left:424.5px;top:149.5px;width:2px;height:26px;background:#ababab;"></div><div class="a" style="left:421.5px;top:174.0px;width:5px;height:1.5px;background:#ababab;"></div><svg class="a" style="left:441px;top:150.4px" width="24" height="24" viewBox="0 0 24 24"><path d="M9 0.6 L19.6 0.6 L15 6.6 L19.8 6 L14.6 12.4 L18.6 12 L5.2 24 L10 15 L4.6 15.8 L9.4 9 L3.8 9.8 Z" fill="#ffee00" stroke="#c8a800" stroke-width="0.9" stroke-linejoin="round"/><path d="M3.8 9.8 L9.4 9 M4.6 15.8 L10 15" stroke="#8a7800" stroke-width="1"/></svg><span class="t " style="left:467.50px;top:153.00px;font-size:18px;font-family:'Liberation Sans', sans-serif;color:#000;letter-spacing:-0.791px;">Generate</span><svg class="a" style="left:557.6px;top:150.4px" width="24" height="24" viewBox="0 0 24 24"><path d="M0.8 6.2 L5.4 1.8 L9.4 4.8 L12 3.4 L14.6 4.8 L18.6 1.8 L23.2 6.2 V13.6 L12 22.4 L0.8 13.6 Z" fill="#00e8f0" stroke="#000" stroke-width="1.4" stroke-linejoin="round"/><path d="M5.4 1.8 L7.6 5.6 M18.6 1.8 L16.4 5.6" stroke="#006868" stroke-width="2.2"/><path d="M5.6 12.6 V7.6 L12 5.2 L18.4 7.6 V12.6" fill="none" stroke="#ff0000" stroke-width="1.5"/><path d="M7.8 10.4 L12 12.6 L16.2 10.4 M12 12.6 V21.6" fill="none" stroke="#000" stroke-width="1.5"/></svg><span class="t " style="left:584.20px;top:153.00px;font-size:18px;font-family:'Liberation Sans', sans-serif;color:#000;letter-spacing:-0.191px;">Share Topology</span><svg class="a" style="left:726px;top:150.4px" width="24" height="24" viewBox="0 0 24 24"><rect x="1" y="1.4" width="22" height="21.6" fill="#fff" stroke="#3050d8" stroke-width="1.5"/><rect x="1" y="0.6" width="22" height="3.2" fill="#2858e0"/><circle cx="2.8" cy="2.2" r="0.8" fill="#f0c040"/><circle cx="21.2" cy="2.2" r="0.8" fill="#f0c040"/><text x="16.8" y="12.6" font-family="'Liberation Sans',sans-serif" font-weight="bold" font-size="10.5" text-anchor="middle" fill="#1040d0">P</text><text x="7" y="21.4" font-family="'Liberation Sans',sans-serif" font-weight="bold" font-size="10.5" text-anchor="middle" fill="#1040d0">P</text><path d="M3.4 8.4 H10.4 M7.6 5.6 L10.6 8.4 L7.6 11.2" fill="none" stroke="#c01010" stroke-width="1.5"/><path d="M12.6 17.4 H20.4 M17.4 14.6 L20.6 17.4 L17.4 20.2" fill="none" stroke="#c01010" stroke-width="1.5"/></svg><span class="t " style="left:753.00px;top:153.00px;font-size:18px;font-family:'Liberation Sans', sans-serif;color:#000;letter-spacing:-0.559px;">Parameters</span><div class="a" style="left:859.0px;top:146px;width:2px;height:33px;background:#b4b4b4;"></div><div class="a" style="left:861.0px;top:146px;width:2px;height:34px;background:#fdfdfd;"></div><div class="a" style="left:865.5px;top:149.5px;width:3px;height:25px;background:#fbfbfb;"></div><div class="a" style="left:868.5px;top:149.5px;width:2px;height:26px;background:#ababab;"></div><div class="a" style="left:865.5px;top:174.0px;width:5px;height:1.5px;background:#ababab;"></div><svg class="a" style="left:884.6px;top:150.4px" width="24" height="24" viewBox="0 0 24 24"><path d="M0.8 0.8 H17.4 L19.6 3 V19.4 H3 L0.8 17.2 Z" fill="#008c8c" stroke="#000" stroke-width="1.4" stroke-linejoin="round"/><rect x="3.6" y="3.4" width="14" height="14" fill="#00b4b4" stroke="#000" stroke-width="1.2"/><path d="M8.4 8 H15 L20.4 13.4 H13.6 Z" fill="#00f0f0" stroke="#000" stroke-width="1.1"/><path d="M8.4 8 L13.6 13.4 V20 L8.4 14.6 Z" fill="#00b4b4" stroke="#000" stroke-width="1.1"/><rect x="13.8" y="13.6" width="8.8" height="8.6" fill="#00f0f0" stroke="#000" stroke-width="1.3"/></svg><span class="t " style="left:910.00px;top:153.00px;font-size:18px;font-family:'Liberation Sans', sans-serif;color:#000;letter-spacing:-0.504px;">Extrude</span><svg class="a" style="left:990px;top:150.4px" width="24" height="24" viewBox="0 0 24 24"><path d="M0.8 21.6 V12 A10.6 9.4 0 0 1 22.2 12 V21.6 H15.2 V13.6 A3.8 3.4 0 0 0 7.8 13.6 V21.6 Z" fill="#00b4b4" stroke="#000" stroke-width="1.4" stroke-linejoin="round"/><path d="M1 12.4 A10.4 9 0 0 1 22 12.4 L15.4 13.4 A3.8 3.4 0 0 0 7.6 13.4 Z" fill="#008c8c"/><rect x="1.4" y="13.6" width="6" height="7.6" fill="#00f0f0"/><rect x="15.8" y="13.6" width="6" height="7.6" fill="#00f0f0"/><path d="M11.4 0 V24" stroke="#000" stroke-width="1.4"/></svg><span class="t " style="left:1015.30px;top:153.00px;font-size:18px;font-family:'Liberation Sans', sans-serif;color:#000;letter-spacing:-0.553px;">Revolve</span><svg class="a" style="left:1097.2px;top:150.4px" width="24" height="24" viewBox="0 0 24 24"><path d="M4.4 0.8 L0.8 5.2 V12.6 C2.6 19 8 23.4 15 23 L22.6 18.6 L18 14 C13 13.6 10.4 10.6 10 6.2 Z" fill="#008c8c" stroke="#000" stroke-width="1.4" stroke-linejoin="round"/><path d="M3.4 8.4 C4.4 14.4 9.6 19 16.6 19" fill="none" stroke="#00f0f0" stroke-width="2.6"/><circle cx="5.2" cy="5.6" r="2.4" fill="none" stroke="#00f0f0" stroke-width="1.4"/><circle cx="17.4" cy="18" r="2.2" fill="none" stroke="#00f0f0" stroke-width="1.4"/></svg><span class="t " style="left:1123.80px;top:153.00px;font-size:18px;font-family:'Liberation Sans', sans-serif;color:#000;letter-spacing:-1.207px;">Sweep</span><svg class="a" style="left:1196.8px;top:150.4px" width="24" height="24" viewBox="0 0 24 24"><path d="M10 0.8 L14.4 5 L14.8 11 L20.2 16.4 L10 23.6 L0.6 16.4 L5.6 11 L5.6 5 Z" fill="#008c8c" stroke="#000" stroke-width="1.3" stroke-linejoin="round"/><path d="M10 1.6 L14 5.2 L10 9.2 L6 5.2 Z" fill="#00f0f0"/><path d="M10 9.2 V23 L19.6 16.4 L14.6 11 L14.2 5.4 Z" fill="#00b4b4"/><path d="M10 9.2 V23.2" stroke="#000" stroke-width="1.3"/></svg><span class="t " style="left:1220.90px;top:153.00px;font-size:18px;font-family:'Liberation Sans', sans-serif;color:#000;letter-spacing:0.283px;">Skin/Loft</span><div class="a" style="left:1310.5px;top:146px;width:2px;height:33px;background:#b4b4b4;"></div><div class="a" style="left:1312.5px;top:146px;width:2px;height:34px;background:#fdfdfd;"></div><div class="a" style="left:1317px;top:149.5px;width:3px;height:25px;background:#fbfbfb;"></div><div class="a" style="left:1320px;top:149.5px;width:2px;height:26px;background:#ababab;"></div><div class="a" style="left:1317px;top:174.0px;width:5px;height:1.5px;background:#ababab;"></div><svg class="a" style="left:1336px;top:150.4px" width="24" height="24" viewBox="0 0 24 24"><path d="M0.8 0.8 H17.6 L23 5.6 V22.6 H6.2 L0.8 17.4 Z" fill="#008c8c" stroke="#000" stroke-width="1.4" stroke-linejoin="round"/><rect x="6.2" y="5.6" width="16.8" height="17" fill="#00b4b4" stroke="#000" stroke-width="1.4"/><rect x="9" y="8.6" width="11.2" height="11" fill="#008c8c" stroke="#000" stroke-width="1.2"/><rect x="10" y="9.6" width="4.6" height="3" fill="#00f0f0"/><rect x="10" y="14.6" width="7.6" height="3.4" fill="#00f0f0"/><path d="M14.6 12.6 H19.6" stroke="#000" stroke-width="1.1"/></svg><span class="t " style="left:1363.30px;top:153.00px;font-size:18px;font-family:'Liberation Sans', sans-serif;color:#000;letter-spacing:-0.058px;">Thin/Surface</span><svg class="a" style="left:1485.4px;top:150.4px" width="24" height="24" viewBox="0 0 24 24"><path d="M1 6.4 C1 2.6 3.6 1 6.8 1.6 H10 L21.4 15 L17.4 17.4 L14.8 22.4 L1 10.6 Z" fill="#00b4b4" stroke="#000" stroke-width="1.3" stroke-linejoin="round"/><path d="M1.2 6.8 L14.6 21.6 L17 17 L4.6 4.2" fill="#008c8c"/><path d="M14.8 22.4 L17.4 17.4 L21.4 15" fill="none" stroke="#000" stroke-width="1.3"/></svg><span class="t " style="left:1510.00px;top:153.00px;font-size:18px;font-family:'Liberation Sans', sans-serif;color:#000;letter-spacing:0.093px;">Blend</span><svg class="a" style="left:1589.6px;top:150.4px" width="24" height="24" viewBox="0 0 24 24"><path d="M0.8 7.6 L8.2 0.8 L23 16.4 L15.8 23.2 Z" fill="#00b4b4" stroke="#000" stroke-width="1.3" stroke-linejoin="round"/><path d="M3 5.8 L18 21.4 M5.6 3.4 L20.6 19" stroke="#008c8c" stroke-width="1.1"/></svg><span class="t " style="left:1616.20px;top:153.00px;font-size:18px;font-family:'Liberation Sans', sans-serif;color:#000;letter-spacing:-0.088px;">Chamfer</span><svg class="a" style="left:1703.6px;top:150.4px" width="24" height="24" viewBox="0 0 24 24"><path d="M0.8 4.6 L7.2 1 L12.4 3.4 V15.4 L6 18.6 L0.8 15.8 Z" fill="#008c8c" stroke="#000" stroke-width="1.2" stroke-linejoin="round"/><path d="M6.4 6.8 L12.4 3.6 L17.2 6 V18 L11.2 21 L6.4 18.4 Z" fill="#00b4b4" stroke="#000" stroke-width="1.2" stroke-linejoin="round"/><path d="M11.4 9.6 L17.4 6.4 L23.2 9.2 V20 L16.8 23.4 L11.4 20.8 Z" fill="#00f0f0" stroke="#000" stroke-width="1.2" stroke-linejoin="round"/><path d="M11.4 9.6 L16.8 12.2 L23 9.2 M16.8 12.2 V23.2" fill="none" stroke="#000" stroke-width="1.2"/></svg><span class="t " style="left:1731.00px;top:153.00px;font-size:18px;font-family:'Liberation Sans', sans-serif;color:#000;letter-spacing:-0.826px;">Slice</span><svg class="a" style="left:1564.6px;top:159.4px" width="10.6" height="6.2" viewBox="0 0 10.6 6.2"><path d="M0 0 H10.6 L5.3 6.2 Z" fill="#000"/></svg><div class="a" style="left:3px;top:185.5px;width:3px;height:25px;background:#fbfbfb;"></div><div class="a" style="left:6px;top:185.5px;width:2px;height:26px;background:#ababab;"></div><div class="a" style="left:3px;top:210.0px;width:5px;height:1.5px;background:#ababab;"></div><svg class="a" style="left:21.4px;top:186.2px" width="24" height="24" viewBox="0 0 24 24"><path d="M6.6 12.6 L18.6 5.4 L23.4 13.4 L11.4 23.6 Z" fill="#fff" stroke="#000" stroke-width="1.3" stroke-linejoin="round"/><path d="M0.8 11.6 L12.4 0.8 L22.4 9.2 L10.6 20.6 Z" fill="#00c8c8" stroke="#000" stroke-width="1.4" stroke-linejoin="round"/><rect x="7.4" y="11.4" width="3.6" height="3.6" fill="#404040" stroke="#000" stroke-width="1.2"/><rect x="12.8" y="6.6" width="3.6" height="3.6" fill="#404040" stroke="#000" stroke-width="1.2"/></svg><span class="t " style="left:47.70px;top:189.00px;font-size:18px;font-family:'Liberation Sans', sans-serif;color:#000;letter-spacing:0.393px;">Point</span><svg class="a" style="left:110.6px;top:187.4px" width="24" height="24" viewBox="0 0 24 24"><rect x="0.9" y="0.9" width="9.6" height="8.4" fill="#d8008c" stroke="#000" stroke-width="1.6"/><rect x="0.9" y="13.6" width="9.6" height="8.2" fill="#0078d8" stroke="#000" stroke-width="1.6"/><path d="M12.6 1.6 C23 4 23.6 14.6 14.6 19.8" fill="none" stroke="#ff0000" stroke-width="1.4"/><path d="M12.4 21.6 L14 16.6 L17.4 20.6 Z" fill="#ff0000"/></svg><span class="t " style="left:137.00px;top:189.00px;font-size:18px;font-family:'Liberation Sans', sans-serif;color:#000;letter-spacing:-0.182px;">Conversion</span></nav>
<section aria-label="Tree Outline"><div class="a" style="left:0px;top:217px;width:636px;height:29px;background:linear-gradient(90deg,#98b4d6 0%,#a9c2df 50%,#bad1ea 100%);"></div><span class="t " style="left:6.20px;top:224.00px;font-size:18px;font-family:'Liberation Sans', sans-serif;color:#000;letter-spacing:-0.206px;">Tree Outline</span><svg class="a" style="left:615.4px;top:224px" width="12" height="16" viewBox="0 0 12 16"><rect x="1.2" y="0" width="8.4" height="1.4" fill="#15151f"/><rect x="2.5" y="0" width="1.1" height="10" fill="#15151f"/><rect x="5.7" y="0" width="2.6" height="10" fill="#15151f"/><rect x="0.4" y="9.7" width="10.2" height="1.8" fill="#15151f"/><rect x="4.8" y="11.5" width="1.4" height="3.2" fill="#15151f"/></svg><div class="a" style="left:0px;top:246px;width:636px;height:746px;background:#ffffff;"></div><div class="a" style="left:28.5px;top:261.45px;width:11.0px;height:1.5px;background:repeating-linear-gradient(90deg,#7a7a7a 0 1.5px,transparent 1.5px 3px)"></div><div class="a" style="left:58.45px;top:273.6px;width:1.5px;height:331.6px;background:repeating-linear-gradient(180deg,#7a7a7a 0 1.5px,transparent 1.5px 3px)"></div><div class="a" style="left:60.5px;top:288.65px;width:20.0px;height:1.5px;background:repeating-linear-gradient(90deg,#7a7a7a 0 1.5px,transparent 1.5px 3px)"></div><div class="a" style="left:60.5px;top:315.65px;width:20.0px;height:1.5px;background:repeating-linear-gradient(90deg,#7a7a7a 0 1.5px,transparent 1.5px 3px)"></div><div class="a" style="left:60.5px;top:342.65px;width:20.0px;height:1.5px;background:repeating-linear-gradient(90deg,#7a7a7a 0 1.5px,transparent 1.5px 3px)"></div><div class="a" style="left:60.5px;top:369.65px;width:20.0px;height:1.5px;background:repeating-linear-gradient(90deg,#7a7a7a 0 1.5px,transparent 1.5px 3px)"></div><div class="a" style="left:60.5px;top:396.65px;width:20.0px;height:1.5px;background:repeating-linear-gradient(90deg,#7a7a7a 0 1.5px,transparent 1.5px 3px)"></div><div class="a" style="left:60.5px;top:423.65px;width:20.0px;height:1.5px;background:repeating-linear-gradient(90deg,#7a7a7a 0 1.5px,transparent 1.5px 3px)"></div><div class="a" style="left:60.5px;top:450.65px;width:20.0px;height:1.5px;background:repeating-linear-gradient(90deg,#7a7a7a 0 1.5px,transparent 1.5px 3px)"></div><div class="a" style="left:60.5px;top:477.65px;width:20.0px;height:1.5px;background:repeating-linear-gradient(90deg,#7a7a7a 0 1.5px,transparent 1.5px 3px)"></div><div class="a" style="left:60.5px;top:504.65px;width:20.0px;height:1.5px;background:repeating-linear-gradient(90deg,#7a7a7a 0 1.5px,transparent 1.5px 3px)"></div><div class="a" style="left:60.5px;top:531.6500000000001px;width:20.0px;height:1.5px;background:repeating-linear-gradient(90deg,#7a7a7a 0 1.5px,transparent 1.5px 3px)"></div><div class="a" style="left:60.5px;top:558.6500000000001px;width:20.0px;height:1.5px;background:repeating-linear-gradient(90deg,#7a7a7a 0 1.5px,transparent 1.5px 3px)"></div><div class="a" style="left:60.5px;top:585.6500000000001px;width:20.0px;height:1.5px;background:repeating-linear-gradient(90deg,#7a7a7a 0 1.5px,transparent 1.5px 3px)"></div><div class="a" style="left:69px;top:612.6500000000001px;width:11px;height:1.5px;background:repeating-linear-gradient(90deg,#7a7a7a 0 1.5px,transparent 1.5px 3px)"></div><div class="a" style="left:97.85px;top:625.8000000000001px;width:1.5px;height:6.399999999999977px;background:repeating-linear-gradient(180deg,#7a7a7a 0 1.5px,transparent 1.5px 3px)"></div><div class="a" style="left:110px;top:639.6500000000001px;width:10.5px;height:1.5px;background:repeating-linear-gradient(90deg,#7a7a7a 0 1.5px,transparent 1.5px 3px)"></div><div class="a" style="left:139.45px;top:652.2px;width:1.5px;height:42.39999999999998px;background:repeating-linear-gradient(180deg,#7a7a7a 0 1.5px,transparent 1.5px 3px)"></div><div class="a" style="left:141.5px;top:666.6500000000001px;width:20.0px;height:1.5px;background:repeating-linear-gradient(90deg,#7a7a7a 0 1.5px,transparent 1.5px 3px)"></div><div class="a" style="left:141.5px;top:693.6500000000001px;width:20.0px;height:1.5px;background:repeating-linear-gradient(90deg,#7a7a7a 0 1.5px,transparent 1.5px 3px)"></div><div class="a" style="left:10.4px;top:254.0px;width:13.6px;height:13.4px;border:1.5px solid #8a8a8a;background:#fff"></div><div class="a" style="left:13.8px;top:261.2px;width:10px;height:2px;background:#2a2a2a;"></div><div class="a" style="left:51px;top:605.0px;width:13.6px;height:13.4px;border:1.5px solid #8a8a8a;background:#fff"></div><div class="a" style="left:54.4px;top:612.2px;width:10px;height:2px;background:#2a2a2a;"></div><div class="a" style="left:91.6px;top:632.0px;width:13.6px;height:13.4px;border:1.5px solid #8a8a8a;background:#fff"></div><div class="a" style="left:95.0px;top:639.2px;width:10px;height:2px;background:#2a2a2a;"></div><svg class="a" style="left:40px;top:260.59999999999997px" width="12" height="12" viewBox="0 0 12 12"><path d="M0.8 6.6 L4.6 10.8 L11 0.8" fill="none" stroke="#0e960e" stroke-width="2.6" stroke-linejoin="miter"/></svg><svg class="a" style="left:52.2px;top:247.6px" width="24" height="24" viewBox="0 0 24 24"><path d="M2 22.2 H23 V4.6" fill="none" stroke="#000" stroke-width="1.6"/><path d="M0.8 21 V3 L3.6 0.8 H11.4 L13.6 3.4 H21.6 V21 Z" fill="#eee67c" stroke="#b4ac28" stroke-width="1.4" stroke-linejoin="round"/><path d="M3.4 2.6 H11" stroke="#fffbe0" stroke-width="1.4"/><path d="M11.6 6.2 L19 9.6 V16 L11.6 19.4 L4.2 16 V9.6 Z" fill="#4c80f8" stroke="#000" stroke-width="1.4" stroke-linejoin="round"/><path d="M11.6 6.8 L17.6 9.6 L11.6 12.4 L5.6 9.6 Z" fill="#94b4fc"/><path d="M4.6 9.8 L11.6 13 L18.6 9.8 M11.6 13 V19" fill="none" stroke="#000" stroke-width="1.4"/></svg><span class="t " style="left:83.60px;top:251.00px;font-size:18px;font-family:'Liberation Sans', sans-serif;color:#000;letter-spacing:-0.103px;">E: Fluid Flow (Fluent with Fluent Meshing)</span><svg class="a" style="left:80.6px;top:287.59999999999997px" width="12" height="12" viewBox="0 0 12 12"><path d="M0.8 6.6 L4.6 10.8 L11 0.8" fill="none" stroke="#0e960e" stroke-width="2.6" stroke-linejoin="miter"/></svg><svg class="a" style="left:93.8px;top:275.0px" width="24" height="24" viewBox="0 0 24 24"><path d="M10.6 3 V21.6" stroke="#000" stroke-width="2"/><path d="M10.6 0 L13.8 5.6 H7.4 Z" fill="#00e000"/><circle cx="10.6" cy="2.2" r="2" fill="#00e000"/><path d="M0.8 7.2 L18 15" stroke="#000" stroke-width="1.7"/><path d="M15.6 12 L23.4 17.4 H14.8 Z" fill="#ff0000"/><path d="M10.6 12 L5.6 16" stroke="#000" stroke-width="1.6"/><path d="M6 12.4 L7.2 17.4 L0.4 19.2 Z" fill="#0000ff"/></svg><span class="t " style="left:124.70px;top:278.00px;font-size:18px;font-family:'Liberation Sans', sans-serif;color:#000;letter-spacing:-0.906px;">XYPlane</span><svg class="a" style="left:80.6px;top:314.59999999999997px" width="12" height="12" viewBox="0 0 12 12"><path d="M0.8 6.6 L4.6 10.8 L11 0.8" fill="none" stroke="#0e960e" stroke-width="2.6" stroke-linejoin="miter"/></svg><svg class="a" style="left:93.8px;top:302.0px" width="24" height="24" viewBox="0 0 24 24"><path d="M10.6 3 V21.6" stroke="#000" stroke-width="2"/><path d="M10.6 0 L13.8 5.6 H7.4 Z" fill="#00e000"/><circle cx="10.6" cy="2.2" r="2" fill="#00e000"/><path d="M0.8 7.2 L18 15" stroke="#000" stroke-width="1.7"/><path d="M15.6 12 L23.4 17.4 H14.8 Z" fill="#ff0000"/><path d="M10.6 12 L5.6 16" stroke="#000" stroke-width="1.6"/><path d="M6 12.4 L7.2 17.4 L0.4 19.2 Z" fill="#0000ff"/></svg><span class="t " style="left:124.70px;top:305.00px;font-size:18px;font-family:'Liberation Sans', sans-serif;color:#000;letter-spacing:-0.738px;">ZXPlane</span><svg class="a" style="left:80.6px;top:341.59999999999997px" width="12" height="12" viewBox="0 0 12 12"><path d="M0.8 6.6 L4.6 10.8 L11 0.8" fill="none" stroke="#0e960e" stroke-width="2.6" stroke-linejoin="miter"/></svg><svg class="a" style="left:93.8px;top:329.0px" width="24" height="24" viewBox="0 0 24 24"><path d="M10.6 3 V21.6" stroke="#000" stroke-width="2"/><path d="M10.6 0 L13.8 5.6 H7.4 Z" fill="#00e000"/><circle cx="10.6" cy="2.2" r="2" fill="#00e000"/><path d="M0.8 7.2 L18 15" stroke="#000" stroke-width="1.7"/><path d="M15.6 12 L23.4 17.4 H14.8 Z" fill="#ff0000"/><path d="M10.6 12 L5.6 16" stroke="#000" stroke-width="1.6"/><path d="M6 12.4 L7.2 17.4 L0.4 19.2 Z" fill="#0000ff"/></svg><span class="t " style="left:124.70px;top:332.00px;font-size:18px;font-family:'Liberation Sans', sans-serif;color:#000;letter-spacing:-0.738px;">YZPlane</span><svg class="a" style="left:80.6px;top:368.59999999999997px" width="12" height="12" viewBox="0 0 12 12"><path d="M0.8 6.6 L4.6 10.8 L11 0.8" fill="none" stroke="#0e960e" stroke-width="2.6" stroke-linejoin="miter"/></svg><svg class="a" style="left:93px;top:355.8px" width="24" height="24" viewBox="0 0 24 24"><rect x="0.4" y="0.4" width="23.4" height="23.4" rx="3" fill="#116b45"/><rect x="0.4" y="17" width="23.4" height="6.8" rx="2.6" fill="#0b5a39"/><text x="11.4" y="20.4" font-family="'Liberation Serif',serif" font-style="italic" font-weight="bold" font-size="25" text-anchor="middle" fill="#f2f6f2">P</text></svg><span class="t " style="left:123.70px;top:359.00px;font-size:18px;font-family:'Liberation Sans', sans-serif;color:#000;letter-spacing:0.181px;">Import1</span><svg class="a" style="left:80.6px;top:395.59999999999997px" width="12" height="12" viewBox="0 0 12 12"><path d="M0.8 6.6 L4.6 10.8 L11 0.8" fill="none" stroke="#0e960e" stroke-width="2.6" stroke-linejoin="miter"/></svg><svg class="a" style="left:92.8px;top:383.8px" width="24" height="24" viewBox="0 0 24 24"><path d="M1 5 L7.4 1 L14 4.4 V12 M1 5 V13.6 L6 16.2 M1 5 L7.4 8.4 L14 4.4 M7.4 8.4 V10" fill="none" stroke="#000" stroke-width="1.3" stroke-linejoin="round"/><path d="M8 9.6 L15.6 5.6 L23 9.6 V17.6 L15.4 21.6 L8 17.6 Z" fill="#1fd01f" stroke="#000" stroke-width="1.3" stroke-linejoin="round"/><path d="M8 9.6 L15.6 5.6 L23 9.6 L15.4 13.4 Z" fill="#22e022" stroke="#000" stroke-width="1.2" stroke-linejoin="round"/><path d="M15.4 13.4 L23 9.6 V17.6 L15.4 21.6 Z" fill="#ffffff" stroke="#000" stroke-width="1.2" stroke-linejoin="round"/></svg><span class="t " style="left:123.70px;top:386.00px;font-size:18px;font-family:'Liberation Sans', sans-serif;color:#000;letter-spacing:0.620px;">inlet</span><svg class="a" style="left:80.6px;top:422.59999999999997px" width="12" height="12" viewBox="0 0 12 12"><path d="M0.8 6.6 L4.6 10.8 L11 0.8" fill="none" stroke="#0e960e" stroke-width="2.6" stroke-linejoin="miter"/></svg><svg class="a" style="left:92.8px;top:410.8px" width="24" height="24" viewBox="0 0 24 24"><path d="M1 5 L7.4 1 L14 4.4 V12 M1 5 V13.6 L6 16.2 M1 5 L7.4 8.4 L14 4.4 M7.4 8.4 V10" fill="none" stroke="#000" stroke-width="1.3" stroke-linejoin="round"/><path d="M8 9.6 L15.6 5.6 L23 9.6 V17.6 L15.4 21.6 L8 17.6 Z" fill="#1fd01f" stroke="#000" stroke-width="1.3" stroke-linejoin="round"/><path d="M8 9.6 L15.6 5.6 L23 9.6 L15.4 13.4 Z" fill="#22e022" stroke="#000" stroke-width="1.2" stroke-linejoin="round"/><path d="M15.4 13.4 L23 9.6 V17.6 L15.4 21.6 Z" fill="#ffffff" stroke="#000" stroke-width="1.2" stroke-linejoin="round"/></svg><span class="t " style="left:124.70px;top:413.00px;font-size:18px;font-family:'Liberation Sans', sans-serif;color:#000;letter-spacing:0.394px;">outlet</span><svg class="a" style="left:80.6px;top:449.59999999999997px" width="12" height="12" viewBox="0 0 12 12"><path d="M0.8 6.6 L4.6 10.8 L11 0.8" fill="none" stroke="#0e960e" stroke-width="2.6" stroke-linejoin="miter"/></svg><svg class="a" style="left:92.8px;top:437.8px" width="24" height="24" viewBox="0 0 24 24"><path d="M1 5 L7.4 1 L14 4.4 V12 M1 5 V13.6 L6 16.2 M1 5 L7.4 8.4 L14 4.4 M7.4 8.4 V10" fill="none" stroke="#000" stroke-width="1.3" stroke-linejoin="round"/><path d="M8 9.6 L15.6 5.6 L23 9.6 V17.6 L15.4 21.6 L8 17.6 Z" fill="#1fd01f" stroke="#000" stroke-width="1.3" stroke-linejoin="round"/><path d="M8 9.6 L15.6 5.6 L23 9.6 L15.4 13.4 Z" fill="#22e022" stroke="#000" stroke-width="1.2" stroke-linejoin="round"/><path d="M15.4 13.4 L23 9.6 V17.6 L15.4 21.6 Z" fill="#ffffff" stroke="#000" stroke-width="1.2" stroke-linejoin="round"/></svg><span class="t " style="left:124.70px;top:440.00px;font-size:18px;font-family:'Liberation Sans', sans-serif;color:#000;letter-spacing:0.415px;">channel-top-wall</span><svg class="a" style="left:80.6px;top:476.59999999999997px" width="12" height="12" viewBox="0 0 12 12"><path d="M0.8 6.6 L4.6 10.8 L11 0.8" fill="none" stroke="#0e960e" stroke-width="2.6" stroke-linejoin="miter"/></svg><svg class="a" style="left:92.8px;top:464.8px" width="24" height="24" viewBox="0 0 24 24"><path d="M1 5 L7.4 1 L14 4.4 V12 M1 5 V13.6 L6 16.2 M1 5 L7.4 8.4 L14 4.4 M7.4 8.4 V10" fill="none" stroke="#000" stroke-width="1.3" stroke-linejoin="round"/><path d="M8 9.6 L15.6 5.6 L23 9.6 V17.6 L15.4 21.6 L8 17.6 Z" fill="#1fd01f" stroke="#000" stroke-width="1.3" stroke-linejoin="round"/><path d="M8 9.6 L15.6 5.6 L23 9.6 L15.4 13.4 Z" fill="#22e022" stroke="#000" stroke-width="1.2" stroke-linejoin="round"/><path d="M15.4 13.4 L23 9.6 V17.6 L15.4 21.6 Z" fill="#ffffff" stroke="#000" stroke-width="1.2" stroke-linejoin="round"/></svg><span class="t " style="left:124.70px;top:467.00px;font-size:18px;font-family:'Liberation Sans', sans-serif;color:#000;letter-spacing:0.496px;">channel-bottom-wall</span><svg class="a" style="left:80.6px;top:503.59999999999997px" width="12" height="12" viewBox="0 0 12 12"><path d="M0.8 6.6 L4.6 10.8 L11 0.8" fill="none" stroke="#0e960e" stroke-width="2.6" stroke-linejoin="miter"/></svg><svg class="a" style="left:92.8px;top:491.8px" width="24" height="24" viewBox="0 0 24 24"><path d="M1 5 L7.4 1 L14 4.4 V12 M1 5 V13.6 L6 16.2 M1 5 L7.4 8.4 L14 4.4 M7.4 8.4 V10" fill="none" stroke="#000" stroke-width="1.3" stroke-linejoin="round"/><path d="M8 9.6 L15.6 5.6 L23 9.6 V17.6 L15.4 21.6 L8 17.6 Z" fill="#1fd01f" stroke="#000" stroke-width="1.3" stroke-linejoin="round"/><path d="M8 9.6 L15.6 5.6 L23 9.6 L15.4 13.4 Z" fill="#22e022" stroke="#000" stroke-width="1.2" stroke-linejoin="round"/><path d="M15.4 13.4 L23 9.6 V17.6 L15.4 21.6 Z" fill="#ffffff" stroke="#000" stroke-width="1.2" stroke-linejoin="round"/></svg><span class="t " style="left:124.70px;top:494.00px;font-size:18px;font-family:'Liberation Sans', sans-serif;color:#000;letter-spacing:0.158px;">symmetry</span><svg class="a" style="left:80.6px;top:530.6px" width="12" height="12" viewBox="0 0 12 12"><path d="M0.8 6.6 L4.6 10.8 L11 0.8" fill="none" stroke="#0e960e" stroke-width="2.6" stroke-linejoin="miter"/></svg><svg class="a" style="left:92.8px;top:518.8000000000001px" width="24" height="24" viewBox="0 0 24 24"><path d="M1 5 L7.4 1 L14 4.4 V12 M1 5 V13.6 L6 16.2 M1 5 L7.4 8.4 L14 4.4 M7.4 8.4 V10" fill="none" stroke="#000" stroke-width="1.3" stroke-linejoin="round"/><path d="M8 9.6 L15.6 5.6 L23 9.6 V17.6 L15.4 21.6 L8 17.6 Z" fill="#1fd01f" stroke="#000" stroke-width="1.3" stroke-linejoin="round"/><path d="M8 9.6 L15.6 5.6 L23 9.6 L15.4 13.4 Z" fill="#22e022" stroke="#000" stroke-width="1.2" stroke-linejoin="round"/><path d="M15.4 13.4 L23 9.6 V17.6 L15.4 21.6 Z" fill="#ffffff" stroke="#000" stroke-width="1.2" stroke-linejoin="round"/></svg><span class="t " style="left:124.70px;top:521.00px;font-size:18px;font-family:'Liberation Sans', sans-serif;color:#000;letter-spacing:0.214px;">channel-pin-walls</span><svg class="a" style="left:80.6px;top:557.6px" width="12" height="12" viewBox="0 0 12 12"><path d="M0.8 6.6 L4.6 10.8 L11 0.8" fill="none" stroke="#0e960e" stroke-width="2.6" stroke-linejoin="miter"/></svg><svg class="a" style="left:92.8px;top:545.8000000000001px" width="24" height="24" viewBox="0 0 24 24"><path d="M1 5 L7.4 1 L14 4.4 V12 M1 5 V13.6 L6 16.2 M1 5 L7.4 8.4 L14 4.4 M7.4 8.4 V10" fill="none" stroke="#000" stroke-width="1.3" stroke-linejoin="round"/><path d="M8 9.6 L15.6 5.6 L23 9.6 V17.6 L15.4 21.6 L8 17.6 Z" fill="#1fd01f" stroke="#000" stroke-width="1.3" stroke-linejoin="round"/><path d="M8 9.6 L15.6 5.6 L23 9.6 L15.4 13.4 Z" fill="#22e022" stroke="#000" stroke-width="1.2" stroke-linejoin="round"/><path d="M15.4 13.4 L23 9.6 V17.6 L15.4 21.6 Z" fill="#ffffff" stroke="#000" stroke-width="1.2" stroke-linejoin="round"/></svg><span class="t " style="left:124.70px;top:548.00px;font-size:18px;font-family:'Liberation Sans', sans-serif;color:#000;letter-spacing:0.409px;">flame-wall</span><svg class="a" style="left:80.6px;top:584.6px" width="12" height="12" viewBox="0 0 12 12"><path d="M0.8 6.6 L4.6 10.8 L11 0.8" fill="none" stroke="#0e960e" stroke-width="2.6" stroke-linejoin="miter"/></svg><svg class="a" style="left:92.8px;top:572.8000000000001px" width="24" height="24" viewBox="0 0 24 24"><path d="M1 5 L7.4 1 L14 4.4 V12 M1 5 V13.6 L6 16.2 M1 5 L7.4 8.4 L14 4.4 M7.4 8.4 V10" fill="none" stroke="#000" stroke-width="1.3" stroke-linejoin="round"/><path d="M8 9.6 L15.6 5.6 L23 9.6 V17.6 L15.4 21.6 L8 17.6 Z" fill="#1fd01f" stroke="#000" stroke-width="1.3" stroke-linejoin="round"/><path d="M8 9.6 L15.6 5.6 L23 9.6 L15.4 13.4 Z" fill="#22e022" stroke="#000" stroke-width="1.2" stroke-linejoin="round"/><path d="M15.4 13.4 L23 9.6 V17.6 L15.4 21.6 Z" fill="#ffffff" stroke="#000" stroke-width="1.2" stroke-linejoin="round"/></svg><span class="t " style="left:124.70px;top:575.00px;font-size:18px;font-family:'Liberation Sans', sans-serif;color:#000;letter-spacing:0.639px;">top-wall</span><svg class="a" style="left:80.6px;top:611.6px" width="12" height="12" viewBox="0 0 12 12"><path d="M0.8 6.6 L4.6 10.8 L11 0.8" fill="none" stroke="#0e960e" stroke-width="2.6" stroke-linejoin="miter"/></svg><svg class="a" style="left:92.8px;top:600.2px" width="24" height="24" viewBox="0 0 24 24"><path d="M1 4.8 L7.4 1 L14 4.4 V13 L6.4 16.6 L1 13.6 Z" fill="#0a7c0a" stroke="#000" stroke-width="1.3" stroke-linejoin="round"/><path d="M8 9.6 L15.6 5.6 L23 9.6 V17.6 L15.4 21.6 L8 17.6 Z" fill="#5c8cf4" stroke="#000" stroke-width="1.3" stroke-linejoin="round"/><path d="M8 9.6 L15.6 5.6 L23 9.6 L15.4 13.4 Z" fill="#94b4fc" stroke="#000" stroke-width="1.2" stroke-linejoin="round"/><path d="M15.4 13.4 V21.4" stroke="#000" stroke-width="1.3"/></svg><div class="a" style="left:121.6px;top:597.2px;width:125.8px;height:27px;background:#0078d7;box-sizing:border-box;border:1.5px dotted #e8a060"></div><span class="t " style="left:125.50px;top:602.00px;font-size:18px;font-family:'Liberation Sans', sans-serif;color:#ffffff;letter-spacing:-0.572px;">1 Part, 2 Bodies</span><svg class="a" style="left:121.2px;top:638.6px" width="12" height="12" viewBox="0 0 12 12"><path d="M0.8 6.6 L4.6 10.8 L11 0.8" fill="none" stroke="#0e960e" stroke-width="2.6" stroke-linejoin="miter"/></svg><svg class="a" style="left:133.4px;top:627.6px" width="24" height="24" viewBox="0 0 24 24"><path d="M16.4 0.8000000000000007 L21.0 3.3300000000000005 V7.7 L16.4 10.0 L11.799999999999999 7.7 V3.3300000000000005 Z" fill="#5078f0" stroke="#000" stroke-width="1.2" stroke-linejoin="round"/><path d="M13.639999999999999 4.48 L16.4 6.09 L19.159999999999997 4.48 M16.4 6.09 V9.08" fill="none" stroke="#000" stroke-width="1.1"/><path d="M5.4 8.4 L10.0 10.93 V15.3 L5.4 17.6 L0.8000000000000007 15.3 V10.93 Z" fill="#5078f0" stroke="#000" stroke-width="1.2" stroke-linejoin="round"/><path d="M2.6400000000000006 12.08 L5.4 13.69 L8.16 12.08 M5.4 13.69 V16.68" fill="none" stroke="#000" stroke-width="1.1"/><path d="M17.6 13.799999999999999 L22.200000000000003 16.33 V20.7 L17.6 23.0 L13.000000000000002 20.7 V16.33 Z" fill="#5078f0" stroke="#000" stroke-width="1.2" stroke-linejoin="round"/><path d="M14.840000000000002 17.479999999999997 L17.6 19.09 L20.36 17.479999999999997 M17.6 19.09 V22.08" fill="none" stroke="#000" stroke-width="1.1"/></svg><span class="t " style="left:164.40px;top:629.00px;font-size:18px;font-family:'Liberation Sans', sans-serif;color:#000;letter-spacing:-0.337px;">Part</span><svg class="a" style="left:162px;top:665.6px" width="12" height="12" viewBox="0 0 12 12"><path d="M0.8 6.6 L4.6 10.8 L11 0.8" fill="none" stroke="#0e960e" stroke-width="2.6" stroke-linejoin="miter"/></svg><svg class="a" style="left:179.4px;top:656.8000000000001px" width="19" height="18" viewBox="0 0 19 18"><path d="M9 0.8 L17.4 4.4 V13.2 L9 17.2 L0.8 13.2 V4.4 Z" fill="#eaffff" stroke="#10b8c8" stroke-width="1.5" stroke-linejoin="round"/><path d="M1.4 4.8 L9 8.4 L17 4.8 M9 8.4 V16.6" fill="none" stroke="#10b8c8" stroke-width="1.5"/></svg><span class="t " style="left:205.20px;top:656.00px;font-size:18px;font-family:'Liberation Sans', sans-serif;color:#000;letter-spacing:0.372px;">flow-zone</span><svg class="a" style="left:162px;top:692.6px" width="12" height="12" viewBox="0 0 12 12"><path d="M0.8 6.6 L4.6 10.8 L11 0.8" fill="none" stroke="#0e960e" stroke-width="2.6" stroke-linejoin="miter"/></svg><svg class="a" style="left:179.4px;top:683.8000000000001px" width="19" height="18" viewBox="0 0 19 18"><path d="M9 0.8 L17.4 4.4 V13.2 L9 17.2 L0.8 13.2 V4.4 Z" fill="#eaffff" stroke="#10b8c8" stroke-width="1.5" stroke-linejoin="round"/><path d="M1.4 4.8 L9 8.4 L17 4.8 M9 8.4 V16.6" fill="none" stroke="#10b8c8" stroke-width="1.5"/></svg><span class="t " style="left:205.20px;top:683.00px;font-size:18px;font-family:'Liberation Sans', sans-serif;color:#000;letter-spacing:0.129px;">solid-zone</span><div class="a" style="left:0px;top:992px;width:636px;height:42px;background:#f0f0f0;"></div><div class="a" style="left:0px;top:996px;width:94.2px;height:2px;background:#6d6d6d;"></div><div class="a" style="left:192.4px;top:996px;width:443.6px;height:2px;background:#6d6d6d;"></div><div class="a" style="left:634.6px;top:990px;width:1.4px;height:8px;background:#6d6d6d;"></div><div class="a" style="left:6px;top:1022.6px;width:88.4px;height:2px;background:#6d6d6d;"></div><div class="a" style="left:1.4px;top:998px;width:1.5px;height:24px;background:#f8f8f8;"></div><div class="a" style="left:190.6px;top:996.6px;width:2.2px;height:30px;background:#6d6d6d;"></div><div class="a" style="left:97.6px;top:1025.2px;width:94px;height:2.2px;background:#6d6d6d;"></div><div class="a" style="left:95.4px;top:997px;width:1.6px;height:29px;background:#f6f6f6;"></div><span class="t " style="left:12.20px;top:1006.00px;font-size:15.6px;font-family:'DejaVu Sans Condensed', 'DejaVu Sans', sans-serif;color:#000;letter-spacing:0.999px;">Sketching</span><span class="t " style="left:106.00px;top:1009.00px;font-size:15.6px;font-family:'DejaVu Sans', sans-serif;color:#000;letter-spacing:0.695px;">Modeling</span></section>
<section aria-label="Details View"><div class="a" style="left:0px;top:1034px;width:636px;height:30px;background:linear-gradient(90deg,#bfcfe1 0%,#cbdaea 50%,#d9e6f3 100%);"></div><span class="t " style="left:5.40px;top:1041.00px;font-size:18px;font-family:'Liberation Sans', sans-serif;color:#000;letter-spacing:-0.446px;">Details View</span><svg class="a" style="left:615.4px;top:1041.6px" width="12" height="16" viewBox="0 0 12 16"><rect x="1.2" y="0" width="8.4" height="1.4" fill="#15151f"/><rect x="2.5" y="0" width="1.1" height="10" fill="#15151f"/><rect x="5.7" y="0" width="2.6" height="10" fill="#15151f"/><rect x="0.4" y="9.7" width="10.2" height="1.8" fill="#15151f"/><rect x="4.8" y="11.5" width="1.4" height="3.2" fill="#15151f"/></svg><div class="a" style="left:0px;top:1064px;width:636px;height:432px;background:#ffffff;"></div><div class="a" style="left:128.6px;top:1091.6px;width:507px;height:162px;background:#e8e6e3;"></div><div class="a" style="left:20px;top:1064px;width:616px;height:1.5px;background:#a3a3a3;"></div><div class="a" style="left:20px;top:1091px;width:616px;height:1.5px;background:#a3a3a3;"></div><div class="a" style="left:20px;top:1118px;width:616px;height:1.5px;background:#a3a3a3;"></div><div class="a" style="left:20px;top:1145px;width:616px;height:1.5px;background:#a3a3a3;"></div><div class="a" style="left:20px;top:1172px;width:616px;height:1.5px;background:#a3a3a3;"></div><div class="a" style="left:20px;top:1199px;width:616px;height:1.5px;background:#a3a3a3;"></div><div class="a" style="left:20px;top:1226px;width:616px;height:1.5px;background:#a3a3a3;"></div><div class="a" style="left:20px;top:1253px;width:616px;height:1.5px;background:#a3a3a3;"></div><div class="a" style="left:20px;top:1064px;width:1.5px;height:190.4px;background:#a3a3a3;"></div><div class="a" style="left:634.5px;top:1064px;width:1.5px;height:190.4px;background:#a3a3a3;"></div><div class="a" style="left:127.6px;top:1091.5px;width:1.5px;height:163px;background:#a3a3a3;"></div><div class="a" style="left:3.2px;top:1071.8px;width:10.4px;height:10.2px;border:1.4px solid #9a9a9a;background:#fff"></div><div class="a" style="left:5.8px;top:1077.4px;width:8px;height:1.8px;background:#202020;"></div><span class="t " style="left:25.10px;top:1071.00px;font-size:15.6px;font-family:'DejaVu Sans Condensed', 'DejaVu Sans', sans-serif;color:#000;font-weight:bold;letter-spacing:-0.341px;">Details</span><span class="t " style="left:25.10px;top:1098.00px;font-size:15.6px;font-family:'DejaVu Sans Condensed', 'DejaVu Sans', sans-serif;color:#000;letter-spacing:1.091px;">Bodies</span><span class="t " style="left:132.60px;top:1098.00px;font-size:15.6px;font-family:'DejaVu Sans Condensed', 'DejaVu Sans', sans-serif;color:#000;">2</span><span class="t " style="left:26.10px;top:1125.00px;font-size:15.6px;font-family:'DejaVu Sans Condensed', 'DejaVu Sans', sans-serif;color:#000;letter-spacing:0.795px;">Volume</span><span class="t " style="left:132.60px;top:1125.00px;font-size:15.6px;font-family:'DejaVu Sans Condensed', 'DejaVu Sans', sans-serif;color:#000;letter-spacing:0.546px;">...</span><span class="t " style="left:26.10px;top:1152.00px;font-size:15.6px;font-family:'DejaVu Sans Condensed', 'DejaVu Sans', sans-serif;color:#000;letter-spacing:0.468px;">Surface Area</span><span class="t " style="left:132.60px;top:1152.00px;font-size:15.6px;font-family:'DejaVu Sans Condensed', 'DejaVu Sans', sans-serif;color:#000;letter-spacing:0.546px;">...</span><span class="t " style="left:25.10px;top:1179.00px;font-size:15.6px;font-family:'DejaVu Sans Condensed', 'DejaVu Sans', sans-serif;color:#000;letter-spacing:0.829px;">Faces</span><span class="t " style="left:132.60px;top:1179.00px;font-size:15.6px;font-family:'DejaVu Sans Condensed', 'DejaVu Sans', sans-serif;color:#000;letter-spacing:0.976px;">112</span><span class="t " style="left:25.10px;top:1206.00px;font-size:15.6px;font-family:'DejaVu Sans Condensed', 'DejaVu Sans', sans-serif;color:#000;letter-spacing:0.846px;">Edges</span><span class="t " style="left:132.60px;top:1206.00px;font-size:15.6px;font-family:'DejaVu Sans Condensed', 'DejaVu Sans', sans-serif;color:#000;letter-spacing:0.976px;">372</span><span class="t " style="left:26.10px;top:1233.00px;font-size:15.6px;font-family:'DejaVu Sans Condensed', 'DejaVu Sans', sans-serif;color:#000;letter-spacing:0.197px;">Vertices</span><span class="t " style="left:132.60px;top:1233.00px;font-size:15.6px;font-family:'DejaVu Sans Condensed', 'DejaVu Sans', sans-serif;color:#000;letter-spacing:0.476px;">216</span></section>
<main aria-label="Graphics"><div class="a" style="left:642px;top:217px;width:1917px;height:29px;background:linear-gradient(90deg,#c1cede 0%,#cddae9 50%,#dae7f4 100%);"></div><span class="t " style="left:648.50px;top:224.00px;font-size:18px;font-family:'Liberation Sans', sans-serif;color:#000;letter-spacing:-0.504px;">Graphics</span><svg class="a" style="left:2540.2px;top:224.4px" width="12" height="16" viewBox="0 0 12 16"><rect x="1.2" y="0" width="8.4" height="1.4" fill="#15151f"/><rect x="2.5" y="0" width="1.1" height="10" fill="#15151f"/><rect x="5.7" y="0" width="2.6" height="10" fill="#15151f"/><rect x="0.4" y="9.7" width="10.2" height="1.8" fill="#15151f"/><rect x="4.8" y="11.5" width="1.4" height="3.2" fill="#15151f"/></svg><div class="a" style="left:642px;top:246px;width:1917px;height:1206px;background:linear-gradient(180deg,rgb(108,139,222) 0.00%,rgb(109,140,222) 4.17%,rgb(111,141,223) 8.33%,rgb(114,144,223) 12.50%,rgb(119,148,224) 16.67%,rgb(124,152,226) 20.83%,rgb(131,157,227) 25.00%,rgb(138,163,229) 29.17%,rgb(146,169,231) 33.33%,rgb(155,176,232) 37.50%,rgb(163,183,234) 41.67%,rgb(172,190,236) 45.83%,rgb(182,197,238) 50.00%,rgb(191,204,241) 54.17%,rgb(200,211,243) 58.33%,rgb(208,218,245) 62.50%,rgb(217,225,246) 66.67%,rgb(225,231,248) 70.83%,rgb(232,237,250) 75.00%,rgb(239,242,251) 79.17%,rgb(244,246,253) 83.33%,rgb(249,250,254) 87.50%,rgb(252,253,254) 91.67%,rgb(254,254,255) 95.83%,rgb(255,255,255) 100.00%);"></div><svg class="a" style="left:642px;top:246px" width="1917" height="1206" viewBox="642 246 1917 1206"><polygon points="954.4,421.9 909.1,447.4 909.1,506.0 954.4,480.5" fill="rgba(120,135,165,0.18)"/><polygon points="954.4,421.9 2292.6,1192.9 2247.3,1218.4 909.1,447.4" fill="rgba(144,167,194,0.60)"/><polygon points="909.1,447.4 2247.3,1218.4 2247.3,1230.0 909.1,459.0" fill="rgba(76,88,106,0.70)"/><polygon points="909.1,459.0 2247.3,1230.0 2247.3,1265.0 909.1,494.0" fill="rgba(142,160,186,0.60)"/><polygon points="909.1,494.0 2247.3,1265.0 2247.3,1277.0 909.1,506.0" fill="rgba(84,92,106,0.62)"/><polygon points="954.4,480.5 2292.6,1251.5 2247.3,1230.0 909.1,459.0" fill="rgba(60,70,90,0.16)"/><polygon points="954.4,421.9 909.1,447.4 909.1,459.0 954.4,433.5" fill="rgba(90,104,140,0.25)"/><polygon points="954.4,468.5 909.1,494.0 909.1,506.0 954.4,480.5" fill="rgba(70,84,120,0.35)"/><polygon points="954.4,433.5 909.1,459.0 909.1,494.0 954.4,468.5" fill="rgba(110,135,215,0.30)"/><line x1="954.4" y1="433.5" x2="2292.6" y2="1204.5" stroke="rgba(96,110,136,0.55)" stroke-width="1.1"/><line x1="954.4" y1="468.5" x2="2292.6" y2="1239.5" stroke="rgba(196,208,226,0.42)" stroke-width="1.1"/><line x1="954.4" y1="480.5" x2="2292.6" y2="1251.5" stroke="rgba(96,110,136,0.55)" stroke-width="1"/><line x1="954.4" y1="421.9" x2="954.4" y2="480.5" stroke="rgba(130,140,160,0.8)" stroke-width="1.2"/><line x1="954.4" y1="433.5" x2="909.1" y2="459.0" stroke="rgba(96,110,136,0.55)" stroke-width="1.1"/><line x1="954.4" y1="468.5" x2="909.1" y2="494.0" stroke="rgba(96,110,136,0.55)" stroke-width="1.1"/><line x1="954.4" y1="480.5" x2="909.1" y2="506.0" stroke="rgba(96,110,136,0.55)" stroke-width="1.1"/><line x1="909.1" y1="447.4" x2="2247.3" y2="1218.4" stroke="rgba(196,208,226,0.42)" stroke-width="1.0"/><linearGradient id="gb0" gradientUnits="userSpaceOnUse" x1="1139.6" y1="0" x2="1157.6" y2="0"><stop offset="0" stop-color="rgb(190,202,222)" stop-opacity="0.55"/><stop offset="0.2" stop-color="rgb(178,192,214)" stop-opacity="0.55"/><stop offset="0.24" stop-color="rgb(160,175,200)" stop-opacity="0.55"/><stop offset="1" stop-color="rgb(112,126,154)" stop-opacity="0.6"/></linearGradient><polygon points="1142.6,542.0 1141.2,543.0 1140.1,544.2 1139.6,545.5 1139.6,546.9 1140.1,548.2 1141.1,549.4 1142.6,550.5 1144.5,551.4 1146.6,552.0 1148.9,552.3 1151.3,552.3 1153.6,552.0 1155.8,551.4 1157.6,550.6 1157.6,585.6 1155.8,586.4 1153.6,587.0 1151.3,587.3 1148.9,587.3 1146.6,587.0 1144.5,586.4 1142.6,585.5 1141.1,584.4 1140.1,583.2 1139.6,581.9 1139.6,580.5 1140.1,579.2 1141.2,578.0 1142.6,577.0" fill="url(#gb0)" stroke="rgba(110,124,150,0.75)" stroke-width="0.9"/><polyline points="1142.6,542.0 1144.5,541.1 1146.7,540.5 1149.0,540.3 1151.4,540.3 1153.7,540.6 1155.8,541.2 1157.7,542.0 1159.2,543.1 1160.2,544.3 1160.7,545.6 1160.7,547.0 1160.2,548.3 1159.1,549.5 1157.6,550.6" fill="none" stroke="rgba(150,162,186,0.7)" stroke-width="0.9"/><linearGradient id="gb1" gradientUnits="userSpaceOnUse" x1="1229.9" y1="0" x2="1247.9" y2="0"><stop offset="0" stop-color="rgb(190,202,222)" stop-opacity="0.55"/><stop offset="0.2" stop-color="rgb(178,192,214)" stop-opacity="0.55"/><stop offset="0.24" stop-color="rgb(160,175,200)" stop-opacity="0.55"/><stop offset="1" stop-color="rgb(112,126,154)" stop-opacity="0.6"/></linearGradient><polygon points="1232.9,594.0 1231.4,595.0 1230.4,596.2 1229.9,597.6 1229.9,598.9 1230.4,600.2 1231.4,601.5 1232.9,602.5 1234.7,603.4 1236.9,604.0 1239.2,604.3 1241.6,604.3 1243.9,604.0 1246.1,603.4 1247.9,602.6 1247.9,637.6 1246.1,638.4 1243.9,639.0 1241.6,639.3 1239.2,639.3 1236.9,639.0 1234.7,638.4 1232.9,637.5 1231.4,636.5 1230.4,635.2 1229.9,633.9 1229.9,632.6 1230.4,631.2 1231.4,630.0 1232.9,629.0" fill="url(#gb1)" stroke="rgba(110,124,150,0.75)" stroke-width="0.9"/><polyline points="1232.9,594.0 1234.8,593.1 1236.9,592.6 1239.3,592.3 1241.6,592.3 1244.0,592.6 1246.1,593.2 1248.0,594.1 1249.4,595.1 1250.5,596.3 1251.0,597.7 1251.0,599.0 1250.4,600.3 1249.4,601.6 1247.9,602.6" fill="none" stroke="rgba(150,162,186,0.7)" stroke-width="0.9"/><linearGradient id="gb2" gradientUnits="userSpaceOnUse" x1="1320.1" y1="0" x2="1338.2" y2="0"><stop offset="0" stop-color="rgb(190,202,222)" stop-opacity="0.55"/><stop offset="0.2" stop-color="rgb(178,192,214)" stop-opacity="0.55"/><stop offset="0.24" stop-color="rgb(160,175,200)" stop-opacity="0.55"/><stop offset="1" stop-color="rgb(112,126,154)" stop-opacity="0.6"/></linearGradient><polygon points="1323.2,646.0 1321.7,647.0 1320.7,648.3 1320.2,649.6 1320.1,650.9 1320.7,652.3 1321.7,653.5 1323.2,654.6 1325.0,655.4 1327.2,656.0 1329.5,656.3 1331.9,656.3 1334.2,656.0 1336.3,655.5 1338.2,654.6 1338.2,689.6 1336.3,690.5 1334.2,691.0 1331.9,691.3 1329.5,691.3 1327.2,691.0 1325.0,690.4 1323.2,689.6 1321.7,688.5 1320.7,687.3 1320.1,685.9 1320.2,684.6 1320.7,683.3 1321.7,682.0 1323.2,681.0" fill="url(#gb2)" stroke="rgba(110,124,150,0.75)" stroke-width="0.9"/><polyline points="1323.2,646.0 1325.1,645.2 1327.2,644.6 1329.6,644.3 1331.9,644.3 1334.2,644.6 1336.4,645.2 1338.2,646.1 1339.7,647.1 1340.8,648.4 1341.3,649.7 1341.3,651.0 1340.7,652.4 1339.7,653.6 1338.2,654.6" fill="none" stroke="rgba(150,162,186,0.7)" stroke-width="0.9"/><linearGradient id="gb3" gradientUnits="userSpaceOnUse" x1="1410.4" y1="0" x2="1428.5" y2="0"><stop offset="0" stop-color="rgb(190,202,222)" stop-opacity="0.55"/><stop offset="0.2" stop-color="rgb(178,192,214)" stop-opacity="0.55"/><stop offset="0.24" stop-color="rgb(160,175,200)" stop-opacity="0.55"/><stop offset="1" stop-color="rgb(112,126,154)" stop-opacity="0.6"/></linearGradient><polygon points="1413.5,698.0 1412.0,699.1 1411.0,700.3 1410.4,701.6 1410.4,703.0 1411.0,704.3 1412.0,705.5 1413.5,706.6 1415.3,707.4 1417.5,708.0 1419.8,708.3 1422.2,708.4 1424.5,708.1 1426.6,707.5 1428.5,706.6 1428.5,741.6 1426.6,742.5 1424.5,743.1 1422.2,743.4 1419.8,743.3 1417.5,743.0 1415.3,742.4 1413.5,741.6 1412.0,740.5 1411.0,739.3 1410.4,738.0 1410.4,736.6 1411.0,735.3 1412.0,734.1 1413.5,733.0" fill="url(#gb3)" stroke="rgba(110,124,150,0.75)" stroke-width="0.9"/><polyline points="1413.5,698.0 1415.4,697.2 1417.5,696.6 1419.8,696.3 1422.2,696.3 1424.5,696.6 1426.7,697.2 1428.5,698.1 1430.0,699.2 1431.0,700.4 1431.6,701.7 1431.6,703.1 1431.0,704.4 1430.0,705.6 1428.5,706.6" fill="none" stroke="rgba(150,162,186,0.7)" stroke-width="0.9"/><linearGradient id="gb4" gradientUnits="userSpaceOnUse" x1="1500.7" y1="0" x2="1518.8" y2="0"><stop offset="0" stop-color="rgb(190,202,222)" stop-opacity="0.55"/><stop offset="0.2" stop-color="rgb(178,192,214)" stop-opacity="0.55"/><stop offset="0.24" stop-color="rgb(160,175,200)" stop-opacity="0.55"/><stop offset="1" stop-color="rgb(112,126,154)" stop-opacity="0.6"/></linearGradient><polygon points="1503.8,750.0 1502.3,751.1 1501.3,752.3 1500.7,753.6 1500.7,755.0 1501.2,756.3 1502.3,757.5 1503.8,758.6 1505.6,759.4 1507.7,760.0 1510.1,760.4 1512.4,760.4 1514.8,760.1 1516.9,759.5 1518.8,758.7 1518.8,793.7 1516.9,794.5 1514.8,795.1 1512.4,795.4 1510.1,795.4 1507.7,795.0 1505.6,794.4 1503.8,793.6 1502.3,792.5 1501.2,791.3 1500.7,790.0 1500.7,788.6 1501.3,787.3 1502.3,786.1 1503.8,785.0" fill="url(#gb4)" stroke="rgba(110,124,150,0.75)" stroke-width="0.9"/><polyline points="1503.8,750.0 1505.7,749.2 1507.8,748.6 1510.1,748.3 1512.5,748.3 1514.8,748.7 1517.0,749.3 1518.8,750.1 1520.3,751.2 1521.3,752.4 1521.9,753.7 1521.8,755.1 1521.3,756.4 1520.3,757.6 1518.8,758.7" fill="none" stroke="rgba(150,162,186,0.7)" stroke-width="0.9"/><linearGradient id="gb5" gradientUnits="userSpaceOnUse" x1="1591.0" y1="0" x2="1609.1" y2="0"><stop offset="0" stop-color="rgb(190,202,222)" stop-opacity="0.55"/><stop offset="0.2" stop-color="rgb(178,192,214)" stop-opacity="0.55"/><stop offset="0.24" stop-color="rgb(160,175,200)" stop-opacity="0.55"/><stop offset="1" stop-color="rgb(112,126,154)" stop-opacity="0.6"/></linearGradient><polygon points="1594.1,802.0 1592.6,803.1 1591.6,804.3 1591.0,805.6 1591.0,807.0 1591.5,808.3 1592.6,809.5 1594.0,810.6 1595.9,811.5 1598.0,812.1 1600.4,812.4 1602.7,812.4 1605.1,812.1 1607.2,811.5 1609.1,810.7 1609.1,845.7 1607.2,846.5 1605.1,847.1 1602.7,847.4 1600.4,847.4 1598.0,847.1 1595.9,846.5 1594.0,845.6 1592.6,844.5 1591.5,843.3 1591.0,842.0 1591.0,840.6 1591.6,839.3 1592.6,838.1 1594.1,837.0" fill="url(#gb5)" stroke="rgba(110,124,150,0.75)" stroke-width="0.9"/><polyline points="1594.1,802.0 1595.9,801.2 1598.1,800.6 1600.4,800.3 1602.8,800.4 1605.1,800.7 1607.3,801.3 1609.1,802.1 1610.6,803.2 1611.6,804.4 1612.1,805.7 1612.1,807.1 1611.6,808.4 1610.6,809.6 1609.1,810.7" fill="none" stroke="rgba(150,162,186,0.7)" stroke-width="0.9"/><linearGradient id="gb6" gradientUnits="userSpaceOnUse" x1="1681.3" y1="0" x2="1699.4" y2="0"><stop offset="0" stop-color="rgb(190,202,222)" stop-opacity="0.55"/><stop offset="0.2" stop-color="rgb(178,192,214)" stop-opacity="0.55"/><stop offset="0.24" stop-color="rgb(160,175,200)" stop-opacity="0.55"/><stop offset="1" stop-color="rgb(112,126,154)" stop-opacity="0.6"/></linearGradient><polygon points="1684.4,854.1 1682.9,855.1 1681.8,856.3 1681.3,857.7 1681.3,859.0 1681.8,860.3 1682.8,861.6 1684.3,862.6 1686.2,863.5 1688.3,864.1 1690.6,864.4 1693.0,864.4 1695.3,864.1 1697.5,863.5 1699.4,862.7 1699.4,897.7 1697.5,898.5 1695.3,899.1 1693.0,899.4 1690.6,899.4 1688.3,899.1 1686.2,898.5 1684.3,897.6 1682.8,896.6 1681.8,895.3 1681.3,894.0 1681.3,892.7 1681.8,891.3 1682.9,890.1 1684.4,889.1" fill="url(#gb6)" stroke="rgba(110,124,150,0.75)" stroke-width="0.9"/><polyline points="1684.4,854.1 1686.2,853.2 1688.4,852.7 1690.7,852.4 1693.1,852.4 1695.4,852.7 1697.5,853.3 1699.4,854.1 1700.9,855.2 1701.9,856.4 1702.4,857.8 1702.4,859.1 1701.9,860.4 1700.8,861.7 1699.4,862.7" fill="none" stroke="rgba(150,162,186,0.7)" stroke-width="0.9"/><linearGradient id="gb7" gradientUnits="userSpaceOnUse" x1="1771.6" y1="0" x2="1789.6" y2="0"><stop offset="0" stop-color="rgb(190,202,222)" stop-opacity="0.55"/><stop offset="0.2" stop-color="rgb(178,192,214)" stop-opacity="0.55"/><stop offset="0.24" stop-color="rgb(160,175,200)" stop-opacity="0.55"/><stop offset="1" stop-color="rgb(112,126,154)" stop-opacity="0.6"/></linearGradient><polygon points="1774.7,906.1 1773.2,907.1 1772.1,908.4 1771.6,909.7 1771.6,911.0 1772.1,912.4 1773.1,913.6 1774.6,914.6 1776.5,915.5 1778.6,916.1 1780.9,916.4 1783.3,916.4 1785.6,916.1 1787.8,915.6 1789.6,914.7 1789.6,949.7 1787.8,950.6 1785.6,951.1 1783.3,951.4 1780.9,951.4 1778.6,951.1 1776.5,950.5 1774.6,949.6 1773.1,948.6 1772.1,947.4 1771.6,946.0 1771.6,944.7 1772.1,943.4 1773.2,942.1 1774.7,941.1" fill="url(#gb7)" stroke="rgba(110,124,150,0.75)" stroke-width="0.9"/><polyline points="1774.7,906.1 1776.5,905.3 1778.7,904.7 1781.0,904.4 1783.4,904.4 1785.7,904.7 1787.8,905.3 1789.7,906.2 1791.2,907.2 1792.2,908.5 1792.7,909.8 1792.7,911.1 1792.2,912.5 1791.1,913.7 1789.6,914.7" fill="none" stroke="rgba(150,162,186,0.7)" stroke-width="0.9"/><linearGradient id="gb8" gradientUnits="userSpaceOnUse" x1="1861.9" y1="0" x2="1879.9" y2="0"><stop offset="0" stop-color="rgb(190,202,222)" stop-opacity="0.55"/><stop offset="0.2" stop-color="rgb(178,192,214)" stop-opacity="0.55"/><stop offset="0.24" stop-color="rgb(160,175,200)" stop-opacity="0.55"/><stop offset="1" stop-color="rgb(112,126,154)" stop-opacity="0.6"/></linearGradient><polygon points="1864.9,958.1 1863.5,959.2 1862.4,960.4 1861.9,961.7 1861.9,963.0 1862.4,964.4 1863.4,965.6 1864.9,966.7 1866.8,967.5 1868.9,968.1 1871.2,968.4 1873.6,968.4 1875.9,968.2 1878.1,967.6 1879.9,966.7 1879.9,1001.7 1878.1,1002.6 1875.9,1003.2 1873.6,1003.4 1871.2,1003.4 1868.9,1003.1 1866.8,1002.5 1864.9,1001.7 1863.4,1000.6 1862.4,999.4 1861.9,998.0 1861.9,996.7 1862.4,995.4 1863.5,994.2 1864.9,993.1" fill="url(#gb8)" stroke="rgba(110,124,150,0.75)" stroke-width="0.9"/><polyline points="1864.9,958.1 1866.8,957.3 1869.0,956.7 1871.3,956.4 1873.7,956.4 1876.0,956.7 1878.1,957.3 1880.0,958.2 1881.4,959.2 1882.5,960.5 1883.0,961.8 1883.0,963.2 1882.5,964.5 1881.4,965.7 1879.9,966.7" fill="none" stroke="rgba(150,162,186,0.7)" stroke-width="0.9"/><linearGradient id="gb9" gradientUnits="userSpaceOnUse" x1="1952.2" y1="0" x2="1970.2" y2="0"><stop offset="0" stop-color="rgb(190,202,222)" stop-opacity="0.55"/><stop offset="0.2" stop-color="rgb(178,192,214)" stop-opacity="0.55"/><stop offset="0.24" stop-color="rgb(160,175,200)" stop-opacity="0.55"/><stop offset="1" stop-color="rgb(112,126,154)" stop-opacity="0.6"/></linearGradient><polygon points="1955.2,1010.1 1953.7,1011.2 1952.7,1012.4 1952.2,1013.7 1952.2,1015.1 1952.7,1016.4 1953.7,1017.6 1955.2,1018.7 1957.0,1019.5 1959.2,1020.1 1961.5,1020.5 1963.9,1020.5 1966.2,1020.2 1968.4,1019.6 1970.2,1018.8 1970.2,1053.8 1968.4,1054.6 1966.2,1055.2 1963.9,1055.5 1961.5,1055.5 1959.2,1055.1 1957.0,1054.5 1955.2,1053.7 1953.7,1052.6 1952.7,1051.4 1952.2,1050.1 1952.2,1048.7 1952.7,1047.4 1953.7,1046.2 1955.2,1045.1" fill="url(#gb9)" stroke="rgba(110,124,150,0.75)" stroke-width="0.9"/><polyline points="1955.2,1010.1 1957.1,1009.3 1959.2,1008.7 1961.6,1008.4 1963.9,1008.4 1966.3,1008.7 1968.4,1009.3 1970.3,1010.2 1971.7,1011.3 1972.8,1012.5 1973.3,1013.8 1973.3,1015.2 1972.7,1016.5 1971.7,1017.7 1970.2,1018.8" fill="none" stroke="rgba(150,162,186,0.7)" stroke-width="0.9"/><linearGradient id="gb10" gradientUnits="userSpaceOnUse" x1="2042.4" y1="0" x2="2060.5" y2="0"><stop offset="0" stop-color="rgb(190,202,222)" stop-opacity="0.55"/><stop offset="0.2" stop-color="rgb(178,192,214)" stop-opacity="0.55"/><stop offset="0.24" stop-color="rgb(160,175,200)" stop-opacity="0.55"/><stop offset="1" stop-color="rgb(112,126,154)" stop-opacity="0.6"/></linearGradient><polygon points="2045.5,1062.1 2044.0,1063.2 2043.0,1064.4 2042.5,1065.7 2042.4,1067.1 2043.0,1068.4 2044.0,1069.6 2045.5,1070.7 2047.3,1071.6 2049.5,1072.2 2051.8,1072.5 2054.2,1072.5 2056.5,1072.2 2058.6,1071.6 2060.5,1070.8 2060.5,1105.8 2058.6,1106.6 2056.5,1107.2 2054.2,1107.5 2051.8,1107.5 2049.5,1107.2 2047.3,1106.6 2045.5,1105.7 2044.0,1104.6 2043.0,1103.4 2042.4,1102.1 2042.5,1100.7 2043.0,1099.4 2044.0,1098.2 2045.5,1097.1" fill="url(#gb10)" stroke="rgba(110,124,150,0.75)" stroke-width="0.9"/><polyline points="2045.5,1062.1 2047.4,1061.3 2049.5,1060.7 2051.8,1060.4 2054.2,1060.5 2056.5,1060.8 2058.7,1061.4 2060.5,1062.2 2062.0,1063.3 2063.1,1064.5 2063.6,1065.8 2063.6,1067.2 2063.0,1068.5 2062.0,1069.7 2060.5,1070.8" fill="none" stroke="rgba(150,162,186,0.7)" stroke-width="0.9"/><linearGradient id="gb11" gradientUnits="userSpaceOnUse" x1="2132.7" y1="0" x2="2150.8" y2="0"><stop offset="0" stop-color="rgb(190,202,222)" stop-opacity="0.55"/><stop offset="0.2" stop-color="rgb(178,192,214)" stop-opacity="0.55"/><stop offset="0.24" stop-color="rgb(160,175,200)" stop-opacity="0.55"/><stop offset="1" stop-color="rgb(112,126,154)" stop-opacity="0.6"/></linearGradient><polygon points="2135.8,1114.2 2134.3,1115.2 2133.3,1116.4 2132.7,1117.7 2132.7,1119.1 2133.3,1120.4 2134.3,1121.7 2135.8,1122.7 2137.6,1123.6 2139.8,1124.2 2142.1,1124.5 2144.5,1124.5 2146.8,1124.2 2148.9,1123.6 2150.8,1122.8 2150.8,1157.8 2148.9,1158.6 2146.8,1159.2 2144.5,1159.5 2142.1,1159.5 2139.8,1159.2 2137.6,1158.6 2135.8,1157.7 2134.3,1156.7 2133.3,1155.4 2132.7,1154.1 2132.7,1152.7 2133.3,1151.4 2134.3,1150.2 2135.8,1149.2" fill="url(#gb11)" stroke="rgba(110,124,150,0.75)" stroke-width="0.9"/><polyline points="2135.8,1114.2 2137.7,1113.3 2139.8,1112.7 2142.1,1112.5 2144.5,1112.5 2146.8,1112.8 2149.0,1113.4 2150.8,1114.2 2152.3,1115.3 2153.3,1116.5 2153.9,1117.9 2153.9,1119.2 2153.3,1120.5 2152.3,1121.7 2150.8,1122.8" fill="none" stroke="rgba(150,162,186,0.7)" stroke-width="0.9"/><linearGradient id="gc0" gradientUnits="userSpaceOnUse" x1="1071.7" y1="0" x2="1092.9" y2="0"><stop offset="0" stop-color="rgb(70,76,96)" stop-opacity="0.62"/><stop offset="0.55" stop-color="rgb(120,128,146)" stop-opacity="0.5"/><stop offset="1" stop-color="rgb(190,196,208)" stop-opacity="0.5"/></linearGradient><path d="M1071.7 533.0 V568.0 A10.6 6.1 0 0 0 1092.9 568.0 V533.0 A10.6 6.1 0 0 0 1071.7 533.0 Z" fill="rgba(84,96,122,0.10)"/><rect x="1071.7" y="546.2" width="21.2" height="15.4" fill="rgba(60,70,92,0.26)"/><line x1="1071.7" y1="533.0" x2="1071.7" y2="568.0" stroke="rgba(110,122,150,0.6)" stroke-width="0.9"/><line x1="1092.9" y1="533.0" x2="1092.9" y2="568.0" stroke="rgba(130,142,170,0.5)" stroke-width="0.9"/><ellipse cx="1082.3" cy="533.0" rx="10.6" ry="6.1" fill="rgba(160,176,210,0.18)" stroke="rgba(150,160,182,0.85)" stroke-width="1"/><ellipse cx="1082.3" cy="568.0" rx="10.6" ry="6.1" fill="url(#gc0)" stroke="rgba(70,84,116,0.9)" stroke-width="1"/><linearGradient id="gc1" gradientUnits="userSpaceOnUse" x1="1162.0" y1="0" x2="1183.2" y2="0"><stop offset="0" stop-color="rgb(70,76,96)" stop-opacity="0.62"/><stop offset="0.55" stop-color="rgb(120,128,146)" stop-opacity="0.5"/><stop offset="1" stop-color="rgb(190,196,208)" stop-opacity="0.5"/></linearGradient><path d="M1162.0 585.0 V620.0 A10.6 6.1 0 0 0 1183.2 620.0 V585.0 A10.6 6.1 0 0 0 1162.0 585.0 Z" fill="rgba(84,96,122,0.10)"/><rect x="1162.0" y="598.2" width="21.2" height="15.4" fill="rgba(60,70,92,0.26)"/><line x1="1162.0" y1="585.0" x2="1162.0" y2="620.0" stroke="rgba(110,122,150,0.6)" stroke-width="0.9"/><line x1="1183.2" y1="585.0" x2="1183.2" y2="620.0" stroke="rgba(130,142,170,0.5)" stroke-width="0.9"/><ellipse cx="1172.6" cy="585.0" rx="10.6" ry="6.1" fill="rgba(160,176,210,0.18)" stroke="rgba(150,160,182,0.85)" stroke-width="1"/><ellipse cx="1172.6" cy="620.0" rx="10.6" ry="6.1" fill="url(#gc1)" stroke="rgba(70,84,116,0.9)" stroke-width="1"/><linearGradient id="gc2" gradientUnits="userSpaceOnUse" x1="1252.3" y1="0" x2="1273.5" y2="0"><stop offset="0" stop-color="rgb(70,76,96)" stop-opacity="0.62"/><stop offset="0.55" stop-color="rgb(120,128,146)" stop-opacity="0.5"/><stop offset="1" stop-color="rgb(190,196,208)" stop-opacity="0.5"/></linearGradient><path d="M1252.3 637.1 V672.1 A10.6 6.1 0 0 0 1273.5 672.1 V637.1 A10.6 6.1 0 0 0 1252.3 637.1 Z" fill="rgba(84,96,122,0.10)"/><rect x="1252.3" y="650.3" width="21.2" height="15.4" fill="rgba(60,70,92,0.26)"/><line x1="1252.3" y1="637.1" x2="1252.3" y2="672.1" stroke="rgba(110,122,150,0.6)" stroke-width="0.9"/><line x1="1273.5" y1="637.1" x2="1273.5" y2="672.1" stroke="rgba(130,142,170,0.5)" stroke-width="0.9"/><ellipse cx="1262.9" cy="637.1" rx="10.6" ry="6.1" fill="rgba(160,176,210,0.18)" stroke="rgba(150,160,182,0.85)" stroke-width="1"/><ellipse cx="1262.9" cy="672.1" rx="10.6" ry="6.1" fill="url(#gc2)" stroke="rgba(70,84,116,0.9)" stroke-width="1"/><linearGradient id="gc3" gradientUnits="userSpaceOnUse" x1="1342.6" y1="0" x2="1363.8" y2="0"><stop offset="0" stop-color="rgb(70,76,96)" stop-opacity="0.62"/><stop offset="0.55" stop-color="rgb(120,128,146)" stop-opacity="0.5"/><stop offset="1" stop-color="rgb(190,196,208)" stop-opacity="0.5"/></linearGradient><path d="M1342.6 689.1 V724.1 A10.6 6.1 0 0 0 1363.8 724.1 V689.1 A10.6 6.1 0 0 0 1342.6 689.1 Z" fill="rgba(84,96,122,0.10)"/><rect x="1342.6" y="702.3" width="21.2" height="15.4" fill="rgba(60,70,92,0.26)"/><line x1="1342.6" y1="689.1" x2="1342.6" y2="724.1" stroke="rgba(110,122,150,0.6)" stroke-width="0.9"/><line x1="1363.8" y1="689.1" x2="1363.8" y2="724.1" stroke="rgba(130,142,170,0.5)" stroke-width="0.9"/><ellipse cx="1353.2" cy="689.1" rx="10.6" ry="6.1" fill="rgba(160,176,210,0.18)" stroke="rgba(150,160,182,0.85)" stroke-width="1"/><ellipse cx="1353.2" cy="724.1" rx="10.6" ry="6.1" fill="url(#gc3)" stroke="rgba(70,84,116,0.9)" stroke-width="1"/><linearGradient id="gc4" gradientUnits="userSpaceOnUse" x1="1432.9" y1="0" x2="1454.1" y2="0"><stop offset="0" stop-color="rgb(70,76,96)" stop-opacity="0.62"/><stop offset="0.55" stop-color="rgb(120,128,146)" stop-opacity="0.5"/><stop offset="1" stop-color="rgb(190,196,208)" stop-opacity="0.5"/></linearGradient><path d="M1432.9 741.1 V776.1 A10.6 6.1 0 0 0 1454.1 776.1 V741.1 A10.6 6.1 0 0 0 1432.9 741.1 Z" fill="rgba(84,96,122,0.10)"/><rect x="1432.9" y="754.3" width="21.2" height="15.4" fill="rgba(60,70,92,0.26)"/><line x1="1432.9" y1="741.1" x2="1432.9" y2="776.1" stroke="rgba(110,122,150,0.6)" stroke-width="0.9"/><line x1="1454.1" y1="741.1" x2="1454.1" y2="776.1" stroke="rgba(130,142,170,0.5)" stroke-width="0.9"/><ellipse cx="1443.5" cy="741.1" rx="10.6" ry="6.1" fill="rgba(160,176,210,0.18)" stroke="rgba(150,160,182,0.85)" stroke-width="1"/><ellipse cx="1443.5" cy="776.1" rx="10.6" ry="6.1" fill="url(#gc4)" stroke="rgba(70,84,116,0.9)" stroke-width="1"/><linearGradient id="gc5" gradientUnits="userSpaceOnUse" x1="1523.2" y1="0" x2="1544.4" y2="0"><stop offset="0" stop-color="rgb(70,76,96)" stop-opacity="0.62"/><stop offset="0.55" stop-color="rgb(120,128,146)" stop-opacity="0.5"/><stop offset="1" stop-color="rgb(190,196,208)" stop-opacity="0.5"/></linearGradient><path d="M1523.2 793.1 V828.1 A10.6 6.1 0 0 0 1544.4 828.1 V793.1 A10.6 6.1 0 0 0 1523.2 793.1 Z" fill="rgba(84,96,122,0.10)"/><rect x="1523.2" y="806.3" width="21.2" height="15.4" fill="rgba(60,70,92,0.26)"/><line x1="1523.2" y1="793.1" x2="1523.2" y2="828.1" stroke="rgba(110,122,150,0.6)" stroke-width="0.9"/><line x1="1544.4" y1="793.1" x2="1544.4" y2="828.1" stroke="rgba(130,142,170,0.5)" stroke-width="0.9"/><ellipse cx="1533.8" cy="793.1" rx="10.6" ry="6.1" fill="rgba(160,176,210,0.18)" stroke="rgba(150,160,182,0.85)" stroke-width="1"/><ellipse cx="1533.8" cy="828.1" rx="10.6" ry="6.1" fill="url(#gc5)" stroke="rgba(70,84,116,0.9)" stroke-width="1"/><linearGradient id="gc6" gradientUnits="userSpaceOnUse" x1="1613.5" y1="0" x2="1634.7" y2="0"><stop offset="0" stop-color="rgb(70,76,96)" stop-opacity="0.62"/><stop offset="0.55" stop-color="rgb(120,128,146)" stop-opacity="0.5"/><stop offset="1" stop-color="rgb(190,196,208)" stop-opacity="0.5"/></linearGradient><path d="M1613.5 845.1 V880.1 A10.6 6.1 0 0 0 1634.7 880.1 V845.1 A10.6 6.1 0 0 0 1613.5 845.1 Z" fill="rgba(84,96,122,0.10)"/><rect x="1613.5" y="858.4" width="21.2" height="15.4" fill="rgba(60,70,92,0.26)"/><line x1="1613.5" y1="845.1" x2="1613.5" y2="880.1" stroke="rgba(110,122,150,0.6)" stroke-width="0.9"/><line x1="1634.7" y1="845.1" x2="1634.7" y2="880.1" stroke="rgba(130,142,170,0.5)" stroke-width="0.9"/><ellipse cx="1624.1" cy="845.1" rx="10.6" ry="6.1" fill="rgba(160,176,210,0.18)" stroke="rgba(150,160,182,0.85)" stroke-width="1"/><ellipse cx="1624.1" cy="880.1" rx="10.6" ry="6.1" fill="url(#gc6)" stroke="rgba(70,84,116,0.9)" stroke-width="1"/><linearGradient id="gc7" gradientUnits="userSpaceOnUse" x1="1703.8" y1="0" x2="1725.0" y2="0"><stop offset="0" stop-color="rgb(70,76,96)" stop-opacity="0.62"/><stop offset="0.55" stop-color="rgb(120,128,146)" stop-opacity="0.5"/><stop offset="1" stop-color="rgb(190,196,208)" stop-opacity="0.5"/></linearGradient><path d="M1703.8 897.1 V932.1 A10.6 6.1 0 0 0 1725.0 932.1 V897.1 A10.6 6.1 0 0 0 1703.8 897.1 Z" fill="rgba(84,96,122,0.10)"/><rect x="1703.8" y="910.4" width="21.2" height="15.4" fill="rgba(60,70,92,0.26)"/><line x1="1703.8" y1="897.1" x2="1703.8" y2="932.1" stroke="rgba(110,122,150,0.6)" stroke-width="0.9"/><line x1="1725.0" y1="897.1" x2="1725.0" y2="932.1" stroke="rgba(130,142,170,0.5)" stroke-width="0.9"/><ellipse cx="1714.4" cy="897.1" rx="10.6" ry="6.1" fill="rgba(160,176,210,0.18)" stroke="rgba(150,160,182,0.85)" stroke-width="1"/><ellipse cx="1714.4" cy="932.1" rx="10.6" ry="6.1" fill="url(#gc7)" stroke="rgba(70,84,116,0.9)" stroke-width="1"/><linearGradient id="gc8" gradientUnits="userSpaceOnUse" x1="1794.0" y1="0" x2="1815.2" y2="0"><stop offset="0" stop-color="rgb(70,76,96)" stop-opacity="0.62"/><stop offset="0.55" stop-color="rgb(120,128,146)" stop-opacity="0.5"/><stop offset="1" stop-color="rgb(190,196,208)" stop-opacity="0.5"/></linearGradient><path d="M1794.0 949.2 V984.2 A10.6 6.1 0 0 0 1815.2 984.2 V949.2 A10.6 6.1 0 0 0 1794.0 949.2 Z" fill="rgba(84,96,122,0.10)"/><rect x="1794.0" y="962.4" width="21.2" height="15.4" fill="rgba(60,70,92,0.26)"/><line x1="1794.0" y1="949.2" x2="1794.0" y2="984.2" stroke="rgba(110,122,150,0.6)" stroke-width="0.9"/><line x1="1815.2" y1="949.2" x2="1815.2" y2="984.2" stroke="rgba(130,142,170,0.5)" stroke-width="0.9"/><ellipse cx="1804.6" cy="949.2" rx="10.6" ry="6.1" fill="rgba(160,176,210,0.18)" stroke="rgba(150,160,182,0.85)" stroke-width="1"/><ellipse cx="1804.6" cy="984.2" rx="10.6" ry="6.1" fill="url(#gc8)" stroke="rgba(70,84,116,0.9)" stroke-width="1"/><linearGradient id="gc9" gradientUnits="userSpaceOnUse" x1="1884.3" y1="0" x2="1905.5" y2="0"><stop offset="0" stop-color="rgb(70,76,96)" stop-opacity="0.62"/><stop offset="0.55" stop-color="rgb(120,128,146)" stop-opacity="0.5"/><stop offset="1" stop-color="rgb(190,196,208)" stop-opacity="0.5"/></linearGradient><path d="M1884.3 1001.2 V1036.2 A10.6 6.1 0 0 0 1905.5 1036.2 V1001.2 A10.6 6.1 0 0 0 1884.3 1001.2 Z" fill="rgba(84,96,122,0.10)"/><rect x="1884.3" y="1014.4" width="21.2" height="15.4" fill="rgba(60,70,92,0.26)"/><line x1="1884.3" y1="1001.2" x2="1884.3" y2="1036.2" stroke="rgba(110,122,150,0.6)" stroke-width="0.9"/><line x1="1905.5" y1="1001.2" x2="1905.5" y2="1036.2" stroke="rgba(130,142,170,0.5)" stroke-width="0.9"/><ellipse cx="1894.9" cy="1001.2" rx="10.6" ry="6.1" fill="rgba(160,176,210,0.18)" stroke="rgba(150,160,182,0.85)" stroke-width="1"/><ellipse cx="1894.9" cy="1036.2" rx="10.6" ry="6.1" fill="url(#gc9)" stroke="rgba(70,84,116,0.9)" stroke-width="1"/><linearGradient id="gc10" gradientUnits="userSpaceOnUse" x1="1974.6" y1="0" x2="1995.8" y2="0"><stop offset="0" stop-color="rgb(70,76,96)" stop-opacity="0.62"/><stop offset="0.55" stop-color="rgb(120,128,146)" stop-opacity="0.5"/><stop offset="1" stop-color="rgb(190,196,208)" stop-opacity="0.5"/></linearGradient><path d="M1974.6 1053.2 V1088.2 A10.6 6.1 0 0 0 1995.8 1088.2 V1053.2 A10.6 6.1 0 0 0 1974.6 1053.2 Z" fill="rgba(84,96,122,0.10)"/><rect x="1974.6" y="1066.5" width="21.2" height="15.4" fill="rgba(60,70,92,0.26)"/><line x1="1974.6" y1="1053.2" x2="1974.6" y2="1088.2" stroke="rgba(110,122,150,0.6)" stroke-width="0.9"/><line x1="1995.8" y1="1053.2" x2="1995.8" y2="1088.2" stroke="rgba(130,142,170,0.5)" stroke-width="0.9"/><ellipse cx="1985.2" cy="1053.2" rx="10.6" ry="6.1" fill="rgba(160,176,210,0.18)" stroke="rgba(150,160,182,0.85)" stroke-width="1"/><ellipse cx="1985.2" cy="1088.2" rx="10.6" ry="6.1" fill="url(#gc10)" stroke="rgba(70,84,116,0.9)" stroke-width="1"/><linearGradient id="gc11" gradientUnits="userSpaceOnUse" x1="2064.9" y1="0" x2="2086.1" y2="0"><stop offset="0" stop-color="rgb(70,76,96)" stop-opacity="0.62"/><stop offset="0.55" stop-color="rgb(120,128,146)" stop-opacity="0.5"/><stop offset="1" stop-color="rgb(190,196,208)" stop-opacity="0.5"/></linearGradient><path d="M2064.9 1105.2 V1140.2 A10.6 6.1 0 0 0 2086.1 1140.2 V1105.2 A10.6 6.1 0 0 0 2064.9 1105.2 Z" fill="rgba(84,96,122,0.10)"/><rect x="2064.9" y="1118.5" width="21.2" height="15.4" fill="rgba(60,70,92,0.26)"/><line x1="2064.9" y1="1105.2" x2="2064.9" y2="1140.2" stroke="rgba(110,122,150,0.6)" stroke-width="0.9"/><line x1="2086.1" y1="1105.2" x2="2086.1" y2="1140.2" stroke="rgba(130,142,170,0.5)" stroke-width="0.9"/><ellipse cx="2075.5" cy="1105.2" rx="10.6" ry="6.1" fill="rgba(160,176,210,0.18)" stroke="rgba(150,160,182,0.85)" stroke-width="1"/><ellipse cx="2075.5" cy="1140.2" rx="10.6" ry="6.1" fill="url(#gc11)" stroke="rgba(70,84,116,0.9)" stroke-width="1"/><linearGradient id="gf0" gradientUnits="userSpaceOnUse" x1="1097.3" y1="0" x2="1112.3" y2="0"><stop offset="0" stop-color="rgb(86,100,124)" stop-opacity="0.68"/><stop offset="1" stop-color="rgb(70,82,106)" stop-opacity="0.72"/></linearGradient><polygon points="1097.3,602.5 1098.4,601.9 1099.5,601.5 1100.8,601.2 1102.1,600.9 1103.5,600.8 1104.9,600.7 1106.3,600.8 1107.6,600.9 1108.9,601.2 1110.2,601.6 1111.3,602.0 1112.3,611.1 1112.3,611.1" fill="rgba(84,92,106,0.40)"/><polygon points="1097.3,567.5 1098.4,566.9 1099.5,566.5 1100.8,566.2 1102.1,565.9 1103.5,565.8 1104.9,565.7 1106.3,565.8 1107.6,565.9 1108.9,566.2 1110.2,566.6 1111.3,567.0 1112.3,576.1 1112.3,576.1 1112.3,611.1 1112.3,611.1 1111.3,602.0 1110.2,601.6 1108.9,601.2 1107.6,600.9 1106.3,600.8 1104.9,600.7 1103.5,600.8 1102.1,600.9 1100.8,601.2 1099.5,601.5 1098.4,601.9 1097.3,602.5" fill="url(#gf0)" stroke="rgba(70,84,108,0.55)" stroke-width="0.8"/><line x1="1112.9" y1="577.1" x2="1112.9" y2="612.6" stroke="rgba(196,208,226,0.75)" stroke-width="1.2"/><path d="M1112.9 608.1 q3.2 0.8 2.6 4.6" fill="none" stroke="rgba(196,208,226,0.7)" stroke-width="0.9"/><linearGradient id="gf1" gradientUnits="userSpaceOnUse" x1="1187.6" y1="0" x2="1202.6" y2="0"><stop offset="0" stop-color="rgb(86,100,124)" stop-opacity="0.68"/><stop offset="1" stop-color="rgb(70,82,106)" stop-opacity="0.72"/></linearGradient><polygon points="1187.6,654.5 1188.7,654.0 1189.8,653.5 1191.1,653.2 1192.4,652.9 1193.8,652.8 1195.2,652.7 1196.5,652.8 1197.9,653.0 1199.2,653.2 1200.5,653.6 1201.6,654.0 1202.6,663.1 1202.6,663.1" fill="rgba(84,92,106,0.40)"/><polygon points="1187.6,619.5 1188.7,619.0 1189.8,618.5 1191.1,618.2 1192.4,617.9 1193.8,617.8 1195.2,617.7 1196.5,617.8 1197.9,618.0 1199.2,618.2 1200.5,618.6 1201.6,619.0 1202.6,628.1 1202.6,628.1 1202.6,663.1 1202.6,663.1 1201.6,654.0 1200.5,653.6 1199.2,653.2 1197.9,653.0 1196.5,652.8 1195.2,652.7 1193.8,652.8 1192.4,652.9 1191.1,653.2 1189.8,653.5 1188.7,654.0 1187.6,654.5" fill="url(#gf1)" stroke="rgba(70,84,108,0.55)" stroke-width="0.8"/><line x1="1203.2" y1="629.1" x2="1203.2" y2="664.6" stroke="rgba(196,208,226,0.75)" stroke-width="1.2"/><path d="M1203.2 660.1 q3.2 0.8 2.6 4.6" fill="none" stroke="rgba(196,208,226,0.7)" stroke-width="0.9"/><linearGradient id="gf2" gradientUnits="userSpaceOnUse" x1="1277.9" y1="0" x2="1292.9" y2="0"><stop offset="0" stop-color="rgb(86,100,124)" stop-opacity="0.68"/><stop offset="1" stop-color="rgb(70,82,106)" stop-opacity="0.72"/></linearGradient><polygon points="1277.9,706.5 1279.0,706.0 1280.1,705.5 1281.4,705.2 1282.7,705.0 1284.1,704.8 1285.4,704.8 1286.8,704.8 1288.2,705.0 1289.5,705.2 1290.8,705.6 1291.9,706.0 1292.9,715.1 1292.9,715.1" fill="rgba(84,92,106,0.40)"/><polygon points="1277.9,671.5 1279.0,671.0 1280.1,670.5 1281.4,670.2 1282.7,670.0 1284.1,669.8 1285.4,669.8 1286.8,669.8 1288.2,670.0 1289.5,670.2 1290.8,670.6 1291.9,671.0 1292.9,680.1 1292.9,680.1 1292.9,715.1 1292.9,715.1 1291.9,706.0 1290.8,705.6 1289.5,705.2 1288.2,705.0 1286.8,704.8 1285.4,704.8 1284.1,704.8 1282.7,705.0 1281.4,705.2 1280.1,705.5 1279.0,706.0 1277.9,706.5" fill="url(#gf2)" stroke="rgba(70,84,108,0.55)" stroke-width="0.8"/><line x1="1293.5" y1="681.1" x2="1293.5" y2="716.6" stroke="rgba(196,208,226,0.75)" stroke-width="1.2"/><path d="M1293.5 712.1 q3.2 0.8 2.6 4.6" fill="none" stroke="rgba(196,208,226,0.7)" stroke-width="0.9"/><linearGradient id="gf3" gradientUnits="userSpaceOnUse" x1="1368.2" y1="0" x2="1383.2" y2="0"><stop offset="0" stop-color="rgb(86,100,124)" stop-opacity="0.68"/><stop offset="1" stop-color="rgb(70,82,106)" stop-opacity="0.72"/></linearGradient><polygon points="1368.2,758.5 1369.3,758.0 1370.4,757.6 1371.7,757.2 1373.0,757.0 1374.3,756.8 1375.7,756.8 1377.1,756.8 1378.5,757.0 1379.8,757.3 1381.0,757.6 1382.2,758.1 1383.2,767.1 1383.2,767.1" fill="rgba(84,92,106,0.40)"/><polygon points="1368.2,723.5 1369.3,723.0 1370.4,722.6 1371.7,722.2 1373.0,722.0 1374.3,721.8 1375.7,721.8 1377.1,721.8 1378.5,722.0 1379.8,722.3 1381.0,722.6 1382.2,723.1 1383.2,732.1 1383.2,732.1 1383.2,767.1 1383.2,767.1 1382.2,758.1 1381.0,757.6 1379.8,757.3 1378.5,757.0 1377.1,756.8 1375.7,756.8 1374.3,756.8 1373.0,757.0 1371.7,757.2 1370.4,757.6 1369.3,758.0 1368.2,758.5" fill="url(#gf3)" stroke="rgba(70,84,108,0.55)" stroke-width="0.8"/><line x1="1383.8" y1="733.1" x2="1383.8" y2="768.6" stroke="rgba(196,208,226,0.75)" stroke-width="1.2"/><path d="M1383.8 764.1 q3.2 0.8 2.6 4.6" fill="none" stroke="rgba(196,208,226,0.7)" stroke-width="0.9"/><linearGradient id="gf4" gradientUnits="userSpaceOnUse" x1="1458.5" y1="0" x2="1473.5" y2="0"><stop offset="0" stop-color="rgb(86,100,124)" stop-opacity="0.68"/><stop offset="1" stop-color="rgb(70,82,106)" stop-opacity="0.72"/></linearGradient><polygon points="1458.5,810.5 1459.5,810.0 1460.7,809.6 1461.9,809.2 1463.3,809.0 1464.6,808.8 1466.0,808.8 1467.4,808.9 1468.8,809.0 1470.1,809.3 1471.3,809.6 1472.5,810.1 1473.5,819.2 1473.5,819.2" fill="rgba(84,92,106,0.40)"/><polygon points="1458.5,775.5 1459.5,775.0 1460.7,774.6 1461.9,774.2 1463.3,774.0 1464.6,773.8 1466.0,773.8 1467.4,773.9 1468.8,774.0 1470.1,774.3 1471.3,774.6 1472.5,775.1 1473.5,784.2 1473.5,784.2 1473.5,819.2 1473.5,819.2 1472.5,810.1 1471.3,809.6 1470.1,809.3 1468.8,809.0 1467.4,808.9 1466.0,808.8 1464.6,808.8 1463.3,809.0 1461.9,809.2 1460.7,809.6 1459.5,810.0 1458.5,810.5" fill="url(#gf4)" stroke="rgba(70,84,108,0.55)" stroke-width="0.8"/><line x1="1474.1" y1="785.2" x2="1474.1" y2="820.7" stroke="rgba(196,208,226,0.75)" stroke-width="1.2"/><path d="M1474.1 816.2 q3.2 0.8 2.6 4.6" fill="none" stroke="rgba(196,208,226,0.7)" stroke-width="0.9"/><linearGradient id="gf5" gradientUnits="userSpaceOnUse" x1="1548.8" y1="0" x2="1563.8" y2="0"><stop offset="0" stop-color="rgb(86,100,124)" stop-opacity="0.68"/><stop offset="1" stop-color="rgb(70,82,106)" stop-opacity="0.72"/></linearGradient><polygon points="1548.8,862.5 1549.8,862.0 1551.0,861.6 1552.2,861.3 1553.6,861.0 1554.9,860.9 1556.3,860.8 1557.7,860.9 1559.1,861.0 1560.4,861.3 1561.6,861.7 1562.8,862.1 1563.8,871.2 1563.8,871.2" fill="rgba(84,92,106,0.40)"/><polygon points="1548.8,827.5 1549.8,827.0 1551.0,826.6 1552.2,826.3 1553.6,826.0 1554.9,825.9 1556.3,825.8 1557.7,825.9 1559.1,826.0 1560.4,826.3 1561.6,826.7 1562.8,827.1 1563.8,836.2 1563.8,836.2 1563.8,871.2 1563.8,871.2 1562.8,862.1 1561.6,861.7 1560.4,861.3 1559.1,861.0 1557.7,860.9 1556.3,860.8 1554.9,860.9 1553.6,861.0 1552.2,861.3 1551.0,861.6 1549.8,862.0 1548.8,862.5" fill="url(#gf5)" stroke="rgba(70,84,108,0.55)" stroke-width="0.8"/><line x1="1564.4" y1="837.2" x2="1564.4" y2="872.7" stroke="rgba(196,208,226,0.75)" stroke-width="1.2"/><path d="M1564.4 868.2 q3.2 0.8 2.6 4.6" fill="none" stroke="rgba(196,208,226,0.7)" stroke-width="0.9"/><linearGradient id="gf6" gradientUnits="userSpaceOnUse" x1="1639.1" y1="0" x2="1654.1" y2="0"><stop offset="0" stop-color="rgb(86,100,124)" stop-opacity="0.68"/><stop offset="1" stop-color="rgb(70,82,106)" stop-opacity="0.72"/></linearGradient><polygon points="1639.1,914.6 1640.1,914.1 1641.3,913.6 1642.5,913.3 1643.8,913.0 1645.2,912.9 1646.6,912.8 1648.0,912.9 1649.3,913.1 1650.7,913.3 1651.9,913.7 1653.1,914.1 1654.1,923.2 1654.1,923.2" fill="rgba(84,92,106,0.40)"/><polygon points="1639.1,879.6 1640.1,879.1 1641.3,878.6 1642.5,878.3 1643.8,878.0 1645.2,877.9 1646.6,877.8 1648.0,877.9 1649.3,878.1 1650.7,878.3 1651.9,878.7 1653.1,879.1 1654.1,888.2 1654.1,888.2 1654.1,923.2 1654.1,923.2 1653.1,914.1 1651.9,913.7 1650.7,913.3 1649.3,913.1 1648.0,912.9 1646.6,912.8 1645.2,912.9 1643.8,913.0 1642.5,913.3 1641.3,913.6 1640.1,914.1 1639.1,914.6" fill="url(#gf6)" stroke="rgba(70,84,108,0.55)" stroke-width="0.8"/><line x1="1654.7" y1="889.2" x2="1654.7" y2="924.7" stroke="rgba(196,208,226,0.75)" stroke-width="1.2"/><path d="M1654.7 920.2 q3.2 0.8 2.6 4.6" fill="none" stroke="rgba(196,208,226,0.7)" stroke-width="0.9"/><linearGradient id="gf7" gradientUnits="userSpaceOnUse" x1="1729.4" y1="0" x2="1744.3" y2="0"><stop offset="0" stop-color="rgb(86,100,124)" stop-opacity="0.68"/><stop offset="1" stop-color="rgb(70,82,106)" stop-opacity="0.72"/></linearGradient><polygon points="1729.4,966.6 1730.4,966.1 1731.6,965.6 1732.8,965.3 1734.1,965.0 1735.5,964.9 1736.9,964.9 1738.3,964.9 1739.6,965.1 1740.9,965.3 1742.2,965.7 1743.3,966.1 1744.3,975.2 1744.3,975.2" fill="rgba(84,92,106,0.40)"/><polygon points="1729.4,931.6 1730.4,931.1 1731.6,930.6 1732.8,930.3 1734.1,930.0 1735.5,929.9 1736.9,929.9 1738.3,929.9 1739.6,930.1 1740.9,930.3 1742.2,930.7 1743.3,931.1 1744.3,940.2 1744.3,940.2 1744.3,975.2 1744.3,975.2 1743.3,966.1 1742.2,965.7 1740.9,965.3 1739.6,965.1 1738.3,964.9 1736.9,964.9 1735.5,964.9 1734.1,965.0 1732.8,965.3 1731.6,965.6 1730.4,966.1 1729.4,966.6" fill="url(#gf7)" stroke="rgba(70,84,108,0.55)" stroke-width="0.8"/><line x1="1744.9" y1="941.2" x2="1744.9" y2="976.7" stroke="rgba(196,208,226,0.75)" stroke-width="1.2"/><path d="M1744.9 972.2 q3.2 0.8 2.6 4.6" fill="none" stroke="rgba(196,208,226,0.7)" stroke-width="0.9"/><linearGradient id="gf8" gradientUnits="userSpaceOnUse" x1="1819.6" y1="0" x2="1834.6" y2="0"><stop offset="0" stop-color="rgb(86,100,124)" stop-opacity="0.68"/><stop offset="1" stop-color="rgb(70,82,106)" stop-opacity="0.72"/></linearGradient><polygon points="1819.6,1018.6 1820.7,1018.1 1821.8,1017.7 1823.1,1017.3 1824.4,1017.1 1825.8,1016.9 1827.2,1016.9 1828.6,1016.9 1829.9,1017.1 1831.2,1017.4 1832.5,1017.7 1833.6,1018.2 1834.6,1027.2 1834.6,1027.2" fill="rgba(84,92,106,0.40)"/><polygon points="1819.6,983.6 1820.7,983.1 1821.8,982.7 1823.1,982.3 1824.4,982.1 1825.8,981.9 1827.2,981.9 1828.6,981.9 1829.9,982.1 1831.2,982.4 1832.5,982.7 1833.6,983.2 1834.6,992.2 1834.6,992.2 1834.6,1027.2 1834.6,1027.2 1833.6,1018.2 1832.5,1017.7 1831.2,1017.4 1829.9,1017.1 1828.6,1016.9 1827.2,1016.9 1825.8,1016.9 1824.4,1017.1 1823.1,1017.3 1821.8,1017.7 1820.7,1018.1 1819.6,1018.6" fill="url(#gf8)" stroke="rgba(70,84,108,0.55)" stroke-width="0.8"/><line x1="1835.2" y1="993.2" x2="1835.2" y2="1028.7" stroke="rgba(196,208,226,0.75)" stroke-width="1.2"/><path d="M1835.2 1024.2 q3.2 0.8 2.6 4.6" fill="none" stroke="rgba(196,208,226,0.7)" stroke-width="0.9"/><linearGradient id="gf9" gradientUnits="userSpaceOnUse" x1="1909.9" y1="0" x2="1924.9" y2="0"><stop offset="0" stop-color="rgb(86,100,124)" stop-opacity="0.68"/><stop offset="1" stop-color="rgb(70,82,106)" stop-opacity="0.72"/></linearGradient><polygon points="1909.9,1070.6 1911.0,1070.1 1912.1,1069.7 1913.4,1069.3 1914.7,1069.1 1916.1,1068.9 1917.5,1068.9 1918.8,1068.9 1920.2,1069.1 1921.5,1069.4 1922.8,1069.7 1923.9,1070.2 1924.9,1079.3 1924.9,1079.3" fill="rgba(84,92,106,0.40)"/><polygon points="1909.9,1035.6 1911.0,1035.1 1912.1,1034.7 1913.4,1034.3 1914.7,1034.1 1916.1,1033.9 1917.5,1033.9 1918.8,1033.9 1920.2,1034.1 1921.5,1034.4 1922.8,1034.7 1923.9,1035.2 1924.9,1044.3 1924.9,1044.3 1924.9,1079.3 1924.9,1079.3 1923.9,1070.2 1922.8,1069.7 1921.5,1069.4 1920.2,1069.1 1918.8,1068.9 1917.5,1068.9 1916.1,1068.9 1914.7,1069.1 1913.4,1069.3 1912.1,1069.7 1911.0,1070.1 1909.9,1070.6" fill="url(#gf9)" stroke="rgba(70,84,108,0.55)" stroke-width="0.8"/><line x1="1925.5" y1="1045.3" x2="1925.5" y2="1080.8" stroke="rgba(196,208,226,0.75)" stroke-width="1.2"/><path d="M1925.5 1076.3 q3.2 0.8 2.6 4.6" fill="none" stroke="rgba(196,208,226,0.7)" stroke-width="0.9"/><linearGradient id="gf10" gradientUnits="userSpaceOnUse" x1="2000.2" y1="0" x2="2015.2" y2="0"><stop offset="0" stop-color="rgb(86,100,124)" stop-opacity="0.68"/><stop offset="1" stop-color="rgb(70,82,106)" stop-opacity="0.72"/></linearGradient><polygon points="2000.2,1122.6 2001.3,1122.1 2002.4,1121.7 2003.7,1121.3 2005.0,1121.1 2006.4,1121.0 2007.7,1120.9 2009.1,1121.0 2010.5,1121.1 2011.8,1121.4 2013.0,1121.7 2014.2,1122.2 2015.2,1131.3 2015.2,1131.3" fill="rgba(84,92,106,0.40)"/><polygon points="2000.2,1087.6 2001.3,1087.1 2002.4,1086.7 2003.7,1086.3 2005.0,1086.1 2006.4,1086.0 2007.7,1085.9 2009.1,1086.0 2010.5,1086.1 2011.8,1086.4 2013.0,1086.7 2014.2,1087.2 2015.2,1096.3 2015.2,1096.3 2015.2,1131.3 2015.2,1131.3 2014.2,1122.2 2013.0,1121.7 2011.8,1121.4 2010.5,1121.1 2009.1,1121.0 2007.7,1120.9 2006.4,1121.0 2005.0,1121.1 2003.7,1121.3 2002.4,1121.7 2001.3,1122.1 2000.2,1122.6" fill="url(#gf10)" stroke="rgba(70,84,108,0.55)" stroke-width="0.8"/><line x1="2015.8" y1="1097.3" x2="2015.8" y2="1132.8" stroke="rgba(196,208,226,0.75)" stroke-width="1.2"/><path d="M2015.8 1128.3 q3.2 0.8 2.6 4.6" fill="none" stroke="rgba(196,208,226,0.7)" stroke-width="0.9"/><linearGradient id="gf11" gradientUnits="userSpaceOnUse" x1="2090.5" y1="0" x2="2105.5" y2="0"><stop offset="0" stop-color="rgb(86,100,124)" stop-opacity="0.68"/><stop offset="1" stop-color="rgb(70,82,106)" stop-opacity="0.72"/></linearGradient><polygon points="2090.5,1174.7 2091.6,1174.1 2092.7,1173.7 2094.0,1173.4 2095.3,1173.1 2096.6,1173.0 2098.0,1172.9 2099.4,1173.0 2100.8,1173.1 2102.1,1173.4 2103.3,1173.8 2104.5,1174.2 2105.5,1183.3 2105.5,1183.3" fill="rgba(84,92,106,0.40)"/><polygon points="2090.5,1139.7 2091.6,1139.1 2092.7,1138.7 2094.0,1138.4 2095.3,1138.1 2096.6,1138.0 2098.0,1137.9 2099.4,1138.0 2100.8,1138.1 2102.1,1138.4 2103.3,1138.8 2104.5,1139.2 2105.5,1148.3 2105.5,1148.3 2105.5,1183.3 2105.5,1183.3 2104.5,1174.2 2103.3,1173.8 2102.1,1173.4 2100.8,1173.1 2099.4,1173.0 2098.0,1172.9 2096.6,1173.0 2095.3,1173.1 2094.0,1173.4 2092.7,1173.7 2091.6,1174.1 2090.5,1174.7" fill="url(#gf11)" stroke="rgba(70,84,108,0.55)" stroke-width="0.8"/><line x1="2106.1" y1="1149.3" x2="2106.1" y2="1184.8" stroke="rgba(196,208,226,0.75)" stroke-width="1.2"/><path d="M2106.1 1180.3 q3.2 0.8 2.6 4.6" fill="none" stroke="rgba(196,208,226,0.7)" stroke-width="0.9"/><polygon points="2247.3,1218.4 2292.6,1192.9 2292.6,1204.5 2247.3,1230.0" fill="rgba(138,160,190,0.56)"/><polygon points="2247.3,1265.0 2292.6,1239.5 2292.6,1251.5 2247.3,1277.0" fill="rgba(140,160,190,0.56)"/><polygon points="2247.3,1230.0 2261.9,1221.8 2292.6,1239.5 2247.3,1265.0" fill="rgba(142,164,194,0.52)"/><polygon points="2261.9,1221.8 2292.6,1204.5 2292.6,1239.5" fill="rgba(196,202,218,0.36)"/><line x1="2247.3" y1="1230.0" x2="2292.6" y2="1204.5" stroke="rgba(66,84,106,0.9)" stroke-width="1.1"/><line x1="2247.3" y1="1265.0" x2="2292.6" y2="1239.5" stroke="rgba(66,84,106,0.9)" stroke-width="1.1"/><line x1="954.4" y1="421.9" x2="2292.6" y2="1192.9" stroke="rgba(66,84,106,0.9)" stroke-width="1.2"/><line x1="954.4" y1="421.9" x2="909.1" y2="447.4" stroke="rgba(66,84,106,0.9)" stroke-width="1.2"/><line x1="909.1" y1="447.4" x2="909.1" y2="506.0" stroke="rgba(66,84,106,0.9)" stroke-width="1.2"/><line x1="909.1" y1="506.0" x2="2247.3" y2="1277.0" stroke="rgba(66,84,106,0.9)" stroke-width="1.2"/><line x1="2247.3" y1="1277.0" x2="2247.3" y2="1218.4" stroke="rgba(66,84,106,0.9)" stroke-width="1.2"/><line x1="2247.3" y1="1218.4" x2="2292.6" y2="1192.9" stroke="rgba(66,84,106,0.9)" stroke-width="1.2"/><line x1="2292.6" y1="1192.9" x2="2292.6" y2="1251.5" stroke="rgba(66,84,106,0.9)" stroke-width="1.2"/><line x1="2292.6" y1="1251.5" x2="2247.3" y2="1277.0" stroke="rgba(66,84,106,0.9)" stroke-width="1.2"/><line x1="909.1" y1="447.4" x2="2247.3" y2="1218.4" stroke="rgba(66,84,106,0.9)" stroke-width="1.2"/><line x1="909.1" y1="459.0" x2="2247.3" y2="1230.0" stroke="rgba(70,80,100,0.5)" stroke-width="1"/><line x1="909.1" y1="494.0" x2="2247.3" y2="1265.0" stroke="rgba(70,80,100,0.5)" stroke-width="1"/></svg></main>
<section aria-label="Graphics overlays"><div class="a" style="left:642px;top:1452px;width:1917px;height:3px;background:#000000;"></div><div class="a" style="left:642px;top:1455px;width:1917px;height:38px;background:#f0f0f0;"></div><div class="a" style="left:871px;top:1461.2px;width:1687px;height:2px;background:#6e6e6e;"></div><div class="a" style="left:871px;top:1463.2px;width:1687px;height:1px;background:#fbfbfb;"></div><div class="a" style="left:2557px;top:1457px;width:1.4px;height:6px;background:#6e6e6e;"></div><div class="a" style="left:644.4px;top:1456px;width:1.6px;height:35px;background:#ffffff;"></div><div class="a" style="left:645px;top:1489.8px;width:110px;height:2.2px;background:#6e6e6e;"></div><div class="a" style="left:753.6px;top:1463px;width:2px;height:28px;background:#6e6e6e;"></div><span class="t " style="left:653.90px;top:1474.00px;font-size:15.6px;font-family:'DejaVu Sans', sans-serif;color:#000;letter-spacing:0.297px;">Model View</span><div class="a" style="left:756.4px;top:1461.4px;width:113.6px;height:27.6px;box-sizing:border-box;border-left:1.6px solid #fff;border-top:2px solid #6e6e6e;border-right:2px solid #6e6e6e;border-bottom:2px solid #6e6e6e;border-radius:2px"></div><span class="t " style="left:763.20px;top:1470.00px;font-size:15.6px;font-family:'DejaVu Sans Condensed', 'DejaVu Sans', sans-serif;color:#000;letter-spacing:0.670px;">Print Preview</span><div class="a" style="left:1316.6px;top:1367.4px;width:567.2px;height:23.199999999999818px;background:#ffffff;box-sizing:border-box;border:1.4px solid #000;"></div><div class="a" style="left:1316.6px;top:1367.4px;width:141.8px;height:23.199999999999818px;background:#000;"></div><div class="a" style="left:1600.1999999999998px;top:1367.4px;width:141.8px;height:23.199999999999818px;background:#000;"></div><span class="t " style="left:1293.60px;top:1346.00px;font-size:17.5px;font-family:'Liberation Sans', sans-serif;color:#2e2e2e;letter-spacing:0.435px;">0.000</span><span class="t " style="left:1575.20px;top:1346.00px;font-size:17.5px;font-family:'Liberation Sans', sans-serif;color:#2e2e2e;letter-spacing:0.435px;">0.040</span><span class="t " style="left:1858.80px;top:1346.00px;font-size:17.5px;font-family:'Liberation Sans', sans-serif;color:#2e2e2e;letter-spacing:0.555px;">0.080 (m)</span><span class="t " style="left:1434.30px;top:1405.00px;font-size:17.5px;font-family:'Liberation Sans', sans-serif;color:#2e2e2e;letter-spacing:0.410px;">0.020</span><span class="t " style="left:1718.10px;top:1405.00px;font-size:17.5px;font-family:'Liberation Sans', sans-serif;color:#2e2e2e;letter-spacing:0.435px;">0.060</span><svg class="a" style="left:2300px;top:1180px" width="240" height="210" viewBox="2300 1180 240 210"><defs><radialGradient id="gsph" cx="0.45" cy="0.38" r="0.7"><stop offset="0" stop-color="#30f0f0"/><stop offset="0.6" stop-color="#14c8cc"/><stop offset="1" stop-color="#0a9aa0"/></radialGradient><linearGradient id="gyy" x1="0" x2="1" y1="0" y2="0"><stop offset="0" stop-color="#0a7a0a"/><stop offset="0.5" stop-color="#0c8a0c"/><stop offset="1" stop-color="#065c06"/></linearGradient><linearGradient id="gxx" x1="0" x2="0" y1="0" y2="1"><stop offset="0" stop-color="#e00000"/><stop offset="1" stop-color="#7c0000"/></linearGradient><linearGradient id="gzz" x1="0" x2="0" y1="0" y2="1"><stop offset="0" stop-color="#0000f0"/><stop offset="1" stop-color="#000098"/></linearGradient></defs><rect x="2408.8" y="1250" width="6" height="58" fill="url(#gyy)"/><path d="M2411.8 1224.6 L2422.6000000000004 1247 Q2422.8 1252.4 2411.8 1253.2 Q2400.8 1252.4 2401.0 1247 Z" fill="url(#gyy)"/><path d="M2417.8 1317.6 L2472 1346.2 L2469 1351.8 L2414.8 1323.6 Z" fill="url(#gxx)"/><path d="M2491.4 1361.4 L2466 1360.4 Q2462.4 1357 2466.6 1349 Q2470.4 1340.6 2476.4 1340.2 Z" fill="url(#gxx)"/><path d="M2405.8 1317.6 L2351.6 1346.2 L2354.6 1351.8 L2408.8 1323.6 Z" fill="url(#gzz)"/><path d="M2332.4 1361.4 L2357.8 1360.4 Q2361.4 1357 2357.2 1349 Q2353.4 1340.6 2347.4 1340.2 Z" fill="url(#gzz)"/><circle cx="2411.8" cy="1316.6" r="11.4" fill="url(#gsph)"/></svg><span class="t " style="left:2412.50px;top:1196.00px;font-size:17.5px;font-family:'Liberation Sans', sans-serif;color:#28b428;">Y</span><span class="t " style="left:2504.50px;top:1355.00px;font-size:17.5px;font-family:'Liberation Sans', sans-serif;color:#ff5a5a;">X</span><span class="t " style="left:2320.50px;top:1355.00px;font-size:17.5px;font-family:'Liberation Sans', sans-serif;color:#6a6aff;">Z</span><span class="t " style="left:2383.50px;top:252.00px;font-size:57.4px;font-family:'Liberation Sans', sans-serif;color:#ffffff;font-weight:bold;letter-spacing:-1.135px;">Ansys</span><span class="t " style="left:2447.30px;top:310.00px;font-size:30.4px;font-family:'Liberation Sans', sans-serif;color:#ffffff;font-weight:bold;letter-spacing:-1.883px;">2025 R2</span><div class="a" style="left:2382.6px;top:345.4px;width:164.6px;height:2.9px;background:#ffffff;"></div><span class="t " style="left:2397.50px;top:354.00px;font-size:29.8px;font-family:'Liberation Sans', sans-serif;color:#ffffff;font-weight:bold;letter-spacing:-1.484px;">STUDENT</span></section>
<footer aria-label="Status bar"><div class="a" style="left:636px;top:217px;width:6px;height:1276px;background:#f0f0f0;"></div><div class="a" style="left:0px;top:1493px;width:2559px;height:5.5px;background:#fbfbfb;"></div><div class="a" style="left:0px;top:1498.6px;width:2559px;height:1.6px;background:#a9a9a9;"></div><div class="a" style="left:0px;top:1500.2px;width:2559px;height:27px;background:#f0f0f0;"></div><div class="a" style="left:0px;top:1500px;width:1.5px;height:27px;background:#b8b8b8;"></div><svg class="a" style="left:15px;top:1502px" width="24" height="24" viewBox="0 0 24 24"><defs><radialGradient id="grdy" cx="0.4" cy="0.3" r="0.75"><stop offset="0" stop-color="#58d060"/><stop offset="0.6" stop-color="#16a030"/><stop offset="1" stop-color="#0a7420"/></radialGradient></defs><circle cx="12" cy="12" r="11.6" fill="url(#grdy)"/><path d="M5.8 12.4 L10.4 17 L18.6 7" fill="none" stroke="#fff" stroke-width="3.4" stroke-linecap="round" stroke-linejoin="round"/></svg><span class="t " style="left:56.50px;top:1505.00px;font-size:18px;font-family:'Liberation Sans', sans-serif;color:#000;letter-spacing:-0.958px;">Ready</span><div class="a" style="left:1534px;top:1500.5px;width:1.4px;height:27px;background:#fdfdfd;"></div><div class="a" style="left:1539px;top:1500.5px;width:1.4px;height:27px;background:#a8a8a8;"></div><div class="a" style="left:1539px;top:1500.2px;width:583px;height:1.2px;background:#b9b9b9;"></div><div class="a" style="left:2122px;top:1500.5px;width:1.4px;height:27px;background:#fdfdfd;"></div><div class="a" style="left:2127px;top:1500.5px;width:1.4px;height:27px;background:#a8a8a8;"></div><div class="a" style="left:2127px;top:1500.2px;width:252px;height:1.2px;background:#b9b9b9;"></div><div class="a" style="left:2379px;top:1500.5px;width:1.4px;height:27px;background:#fdfdfd;"></div><div class="a" style="left:2383.2px;top:1500.5px;width:1.4px;height:27px;background:#a8a8a8;"></div><div class="a" style="left:2383.2px;top:1500.2px;width:72.20000000000027px;height:1.2px;background:#b9b9b9;"></div><div class="a" style="left:2455.4px;top:1500.5px;width:1.4px;height:27px;background:#fdfdfd;"></div><div class="a" style="left:2459.6px;top:1500.5px;width:1.4px;height:27px;background:#a8a8a8;"></div><div class="a" style="left:2459.6px;top:1500.2px;width:72.0px;height:1.2px;background:#b9b9b9;"></div><div class="a" style="left:2531.6px;top:1500.5px;width:1.4px;height:27px;background:#fdfdfd;"></div><span class="t " style="left:1541.80px;top:1505.00px;font-size:18px;font-family:'Liberation Sans', sans-serif;color:#000;letter-spacing:-0.104px;">No Selection</span><span class="t " style="left:2129.60px;top:1505.00px;font-size:18px;font-family:'Liberation Sans', sans-serif;color:#000;letter-spacing:0.196px;">Meter</span><span class="t " style="left:2189.40px;top:1505.00px;font-size:18px;font-family:'Liberation Sans', sans-serif;color:#000;letter-spacing:-0.565px;">Degree</span><span class="t " style="left:2386.60px;top:1505.00px;font-size:18px;font-family:'Liberation Sans', sans-serif;color:#000;">0</span><span class="t " style="left:2463.30px;top:1505.00px;font-size:18px;font-family:'Liberation Sans', sans-serif;color:#000;">0</span><svg class="a" style="left:2534px;top:1502px" width="25" height="25" viewBox="0 0 25 25"><g stroke="#a0a0a0" stroke-width="1.6"><path d="M25 7 L7 25 M25 13 L13 25 M25 19 L19 25"/></g><g stroke="#fff" stroke-width="1"><path d="M25 9 L9 25 M25 15 L15 25 M25 21 L21 25"/></g></svg></footer>
</body></html>
